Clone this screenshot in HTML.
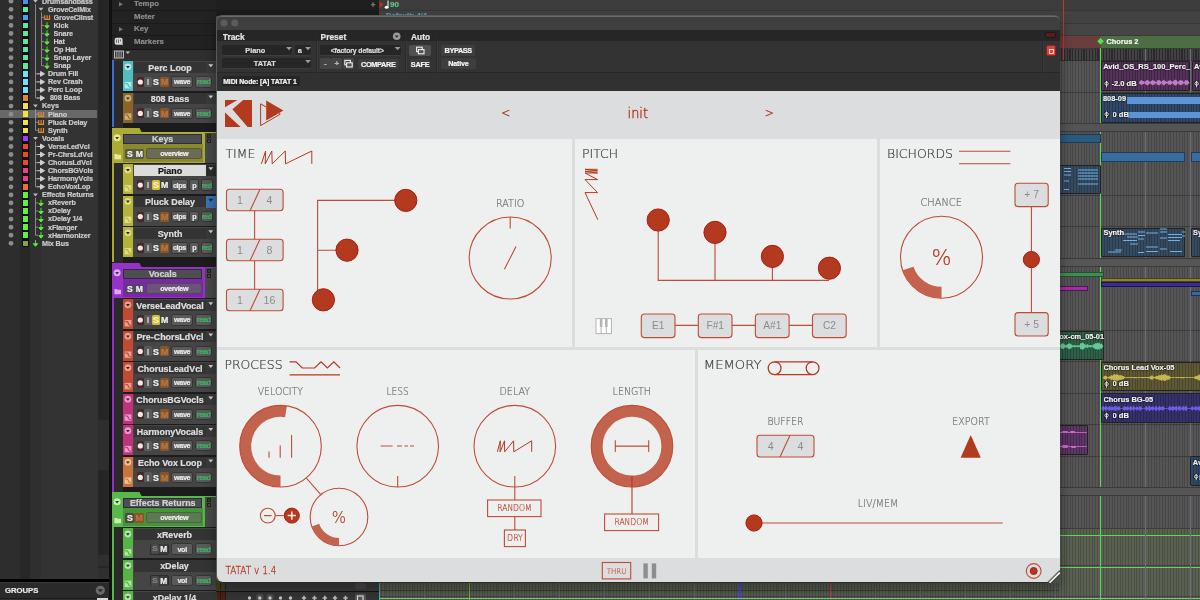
<!DOCTYPE html>
<html><head><meta charset="utf-8"><title>TATAT</title>
<style>
html,body{margin:0;padding:0}
body{width:1200px;height:600px;overflow:hidden;background:#2a2a2a;position:relative;
 font-family:"Liberation Sans",sans-serif;}
body div{position:absolute;box-sizing:border-box;white-space:nowrap;overflow:hidden}
#w{left:0;top:0;width:1200px;height:600px;will-change:transform}
.b{font-weight:bold;-webkit-text-stroke:0.22px currentColor}
.c{text-align:center}
svg{position:absolute;left:0;top:0}
svg text{font-family:"Liberation Sans",sans-serif}
svg text.lt{font-family:"DejaVu Sans Light","DejaVu Sans","Liberation Sans",sans-serif;font-weight:200}
</style></head>
<body>
<div id="w">
<div style="left:112px;top:0px;width:1088px;height:600px;background:#4a4a4a;"></div>
<div style="left:379px;top:48px;width:821px;height:552px;background:repeating-linear-gradient(90deg,#555555 0,#555555 1.8px,#474747 1.8px,#474747 2.8px);"></div>
<div style="left:215px;top:0px;width:164px;height:10px;background:#1f1f1f;"></div>
<div style="left:215px;top:10px;width:164px;height:6px;background:#1b1b1b;"></div>
<div style="left:379px;top:0px;width:821px;height:10px;background:#3d3d3d;"></div>
<div style="left:379px;top:10px;width:821px;height:12.5px;background:#424242;border-top:1px solid #373737"></div>
<div style="left:379px;top:22.5px;width:821px;height:12.5px;background:#454545;border-top:1px solid #393939"></div>
<div style="left:379px;top:35px;width:821px;height:12.5px;background:#474747;border-top:1px solid #393939"></div>
<div class="b" style="left:370.5px;top:-0.4px;width:10px;height:10px;line-height:10px;font-size:8.5px;color:#777;">+</div>
<svg width="1200" height="16" viewBox="0 0 1200 16"><path d="M379.5 1.5 L383.5 4.5 L379.5 8 Z" fill="#d0281c"/><ellipse cx="386.6" cy="7.3" rx="1.9" ry="1.5" fill="#fff"/><path d="M388 7.3 V0.5" stroke="#fff" stroke-width="1"/></svg>
<div class="b" style="left:390px;top:0px;width:20px;height:9px;line-height:9px;font-size:8px;color:#5fc08a;">90</div>
<div class="b" style="left:386px;top:10.9px;width:60px;height:9px;line-height:9px;font-size:7.6px;color:#5a9cbc;">Default: 4/4</div>
<div style="left:0px;top:0px;width:109px;height:600px;background:#2b2b2b;"></div>
<div style="left:0px;top:0px;width:20px;height:580px;background:#2d2d2d;"></div>
<div style="left:20px;top:0px;width:9.5px;height:580px;background:#272727;"></div>
<div style="left:22.4px;top:0px;width:6.4px;height:247px;background:#0e0e1a;"></div>
<div style="left:29.5px;top:0px;width:11px;height:580px;background:#2f2f2f;"></div>
<div style="left:40.5px;top:0px;width:57px;height:580px;background:#333333;"></div>
<div style="left:97.5px;top:0px;width:11px;height:580px;background:#262626;"></div>
<div style="left:97.5px;top:420px;width:11px;height:50px;background:#2e2e2e;"></div>
<div style="left:97.5px;top:555px;width:11px;height:11.4px;background:#2f2f2f;"></div>
<div style="left:97.5px;top:567.8px;width:11px;height:11px;background:#2f2f2f;"></div>
<div style="left:108.5px;top:0px;width:3.5px;height:600px;background:#101010;"></div>
<div style="left:22.8px;top:-1.6px;width:5.6px;height:5.5px;background:#4a8ee6;"></div>
<div class="b" style="left:42.0px;top:-3.5px;width:60px;height:10px;line-height:10px;font-size:7.2px;color:#cacaca;letter-spacing:-0.1px">Drumsandbass</div>
<div style="left:22.8px;top:6.5px;width:5.6px;height:5.5px;background:#5fe89c;"></div>
<div class="b" style="left:48.0px;top:4.6px;width:60px;height:10px;line-height:10px;font-size:7.2px;color:#cacaca;letter-spacing:-0.1px">GroveCelMix</div>
<div style="left:22.8px;top:14.5px;width:5.6px;height:5.5px;background:#4aa0f0;"></div>
<div class="b" style="left:53.5px;top:12.6px;width:60px;height:10px;line-height:10px;font-size:7.2px;color:#cacaca;letter-spacing:-0.1px">GroveClInst</div>
<div style="left:22.8px;top:22.6px;width:5.6px;height:5.5px;background:#5fe89c;"></div>
<div class="b" style="left:53.5px;top:20.7px;width:60px;height:10px;line-height:10px;font-size:7.2px;color:#cacaca;letter-spacing:-0.1px">Kick</div>
<div style="left:22.8px;top:30.7px;width:5.6px;height:5.5px;background:#5fe89c;"></div>
<div class="b" style="left:53.5px;top:28.8px;width:60px;height:10px;line-height:10px;font-size:7.2px;color:#cacaca;letter-spacing:-0.1px">Snare</div>
<div style="left:22.8px;top:38.8px;width:5.6px;height:5.5px;background:#5fe89c;"></div>
<div class="b" style="left:53.5px;top:36.9px;width:60px;height:10px;line-height:10px;font-size:7.2px;color:#cacaca;letter-spacing:-0.1px">Hat</div>
<div style="left:22.8px;top:46.8px;width:5.6px;height:5.5px;background:#5fe89c;"></div>
<div class="b" style="left:53.5px;top:44.9px;width:60px;height:10px;line-height:10px;font-size:7.2px;color:#cacaca;letter-spacing:-0.1px">Op Hat</div>
<div style="left:22.8px;top:54.9px;width:5.6px;height:5.5px;background:#5fe89c;"></div>
<div class="b" style="left:53.5px;top:53.0px;width:60px;height:10px;line-height:10px;font-size:7.2px;color:#cacaca;letter-spacing:-0.1px">Snap Layer</div>
<div style="left:22.8px;top:63.0px;width:5.6px;height:5.5px;background:#5fe89c;"></div>
<div class="b" style="left:53.5px;top:61.1px;width:60px;height:10px;line-height:10px;font-size:7.2px;color:#cacaca;letter-spacing:-0.1px">Snap</div>
<div style="left:22.8px;top:71.0px;width:5.6px;height:5.5px;background:#6fe4f2;"></div>
<div class="b" style="left:48.0px;top:69.1px;width:60px;height:10px;line-height:10px;font-size:7.2px;color:#cacaca;letter-spacing:-0.1px">Drum Fill</div>
<div style="left:22.8px;top:79.1px;width:5.6px;height:5.5px;background:#6fe4f2;"></div>
<div class="b" style="left:48.0px;top:77.2px;width:60px;height:10px;line-height:10px;font-size:7.2px;color:#cacaca;letter-spacing:-0.1px">Rev Crash</div>
<div style="left:22.8px;top:87.2px;width:5.6px;height:5.5px;background:#6fe4f2;"></div>
<div class="b" style="left:48.0px;top:85.3px;width:60px;height:10px;line-height:10px;font-size:7.2px;color:#cacaca;letter-spacing:-0.1px">Perc Loop</div>
<div style="left:22.8px;top:95.2px;width:5.6px;height:5.5px;background:#e08a2c;"></div>
<div class="b" style="left:48.0px;top:93.3px;width:60px;height:10px;line-height:10px;font-size:7.2px;color:#cacaca;letter-spacing:-0.1px">&nbsp;808 Bass</div>
<div style="left:22.8px;top:103.3px;width:5.6px;height:5.5px;background:#f2e23c;"></div>
<div class="b" style="left:42.0px;top:101.4px;width:60px;height:10px;line-height:10px;font-size:7.2px;color:#cacaca;letter-spacing:-0.1px">Keys</div>
<div style="left:0px;top:110.28px;width:97px;height:8.1px;background:#686868;"></div>
<div style="left:22.8px;top:111.4px;width:5.6px;height:5.5px;background:#f2e23c;"></div>
<div class="b" style="left:48.0px;top:109.5px;width:60px;height:10px;line-height:10px;font-size:7.2px;color:#cacaca;letter-spacing:-0.1px">Piano</div>
<div style="left:22.8px;top:119.5px;width:5.6px;height:5.5px;background:#f2e23c;"></div>
<div class="b" style="left:48.0px;top:117.6px;width:60px;height:10px;line-height:10px;font-size:7.2px;color:#cacaca;letter-spacing:-0.1px">Pluck Delay</div>
<div style="left:22.8px;top:127.5px;width:5.6px;height:5.5px;background:#f2e23c;"></div>
<div class="b" style="left:48.0px;top:125.6px;width:60px;height:10px;line-height:10px;font-size:7.2px;color:#cacaca;letter-spacing:-0.1px">Synth</div>
<div style="left:22.8px;top:135.6px;width:5.6px;height:5.5px;background:#a43cf0;"></div>
<div class="b" style="left:42.0px;top:133.7px;width:60px;height:10px;line-height:10px;font-size:7.2px;color:#cacaca;letter-spacing:-0.1px">Vocals</div>
<div style="left:22.8px;top:143.7px;width:5.6px;height:5.5px;background:#f04a24;"></div>
<div class="b" style="left:48.0px;top:141.8px;width:60px;height:10px;line-height:10px;font-size:7.2px;color:#cacaca;letter-spacing:-0.1px">VerseLedVcl</div>
<div style="left:22.8px;top:151.7px;width:5.6px;height:5.5px;background:#f04a24;"></div>
<div class="b" style="left:48.0px;top:149.8px;width:60px;height:10px;line-height:10px;font-size:7.2px;color:#cacaca;letter-spacing:-0.1px">Pr-ChrsLdVcl</div>
<div style="left:22.8px;top:159.8px;width:5.6px;height:5.5px;background:#f04a24;"></div>
<div class="b" style="left:48.0px;top:157.9px;width:60px;height:10px;line-height:10px;font-size:7.2px;color:#cacaca;letter-spacing:-0.1px">ChorusLdVcl</div>
<div style="left:22.8px;top:167.9px;width:5.6px;height:5.5px;background:#f0407c;"></div>
<div class="b" style="left:48.0px;top:166.0px;width:60px;height:10px;line-height:10px;font-size:7.2px;color:#cacaca;letter-spacing:-0.1px">ChorsBGVcls</div>
<div style="left:22.8px;top:175.9px;width:5.6px;height:5.5px;background:#f0407c;"></div>
<div class="b" style="left:48.0px;top:174.0px;width:60px;height:10px;line-height:10px;font-size:7.2px;color:#cacaca;letter-spacing:-0.1px">HarmonyVcls</div>
<div style="left:22.8px;top:184.0px;width:5.6px;height:5.5px;background:#f07030;"></div>
<div class="b" style="left:48.0px;top:182.1px;width:60px;height:10px;line-height:10px;font-size:7.2px;color:#cacaca;letter-spacing:-0.1px">EchoVoxLop</div>
<div style="left:22.8px;top:192.1px;width:5.6px;height:5.5px;background:#62f040;"></div>
<div class="b" style="left:42.0px;top:190.2px;width:60px;height:10px;line-height:10px;font-size:7.2px;color:#cacaca;letter-spacing:-0.1px">Effects Returns</div>
<div style="left:22.8px;top:200.1px;width:5.6px;height:5.5px;background:#62f040;"></div>
<div class="b" style="left:48.0px;top:198.2px;width:60px;height:10px;line-height:10px;font-size:7.2px;color:#cacaca;letter-spacing:-0.1px">xReverb</div>
<div style="left:22.8px;top:208.2px;width:5.6px;height:5.5px;background:#62f040;"></div>
<div class="b" style="left:48.0px;top:206.3px;width:60px;height:10px;line-height:10px;font-size:7.2px;color:#cacaca;letter-spacing:-0.1px">xDelay</div>
<div style="left:22.8px;top:216.3px;width:5.6px;height:5.5px;background:#62f040;"></div>
<div class="b" style="left:48.0px;top:214.4px;width:60px;height:10px;line-height:10px;font-size:7.2px;color:#cacaca;letter-spacing:-0.1px">xDelay 1/4</div>
<div style="left:22.8px;top:224.4px;width:5.6px;height:5.5px;background:#62f040;"></div>
<div class="b" style="left:48.0px;top:222.5px;width:60px;height:10px;line-height:10px;font-size:7.2px;color:#cacaca;letter-spacing:-0.1px">xFlanger</div>
<div style="left:22.8px;top:232.4px;width:5.6px;height:5.5px;background:#62f040;"></div>
<div class="b" style="left:48.0px;top:230.5px;width:60px;height:10px;line-height:10px;font-size:7.2px;color:#cacaca;letter-spacing:-0.1px">xHarmonizer</div>
<div style="left:22.8px;top:240.5px;width:5.6px;height:5.5px;background:#86a832;"></div>
<div class="b" style="left:42.0px;top:238.6px;width:60px;height:10px;line-height:10px;font-size:7.2px;color:#cacaca;letter-spacing:-0.1px">Mix Bus</div>
<svg width="112" height="600" viewBox="0 0 112 600"><circle cx="11" cy="1.2" r="2.4" fill="#8c8c8c"/><path d="M33.1 -0.30000000000000004 h4.8 l-2.4 3 z" fill="#bbb"/><circle cx="11" cy="9.3" r="2.4" fill="#8c8c8c"/><path d="M38.6 7.77 h4.8 l-2.4 3 z" fill="#bbb"/><circle cx="11" cy="17.3" r="2.4" fill="#8c8c8c"/><path d="M44.7 15.14 V19.44 H49.5 V15.14 M47.1 15.14 V19.44" fill="none" stroke="#e08a2c" stroke-width="1.2"/><circle cx="11" cy="25.4" r="2.4" fill="#8c8c8c"/><path d="M47 22.21 v4 M44.8 25.81 l2.2 2.6 l2.2 -2.6 z" stroke="#5cf03c" stroke-width="0.9" fill="#5cf03c"/><circle cx="11" cy="33.5" r="2.4" fill="#8c8c8c"/><path d="M47 30.280000000000005 v4 M44.8 33.88 l2.2 2.6 l2.2 -2.6 z" stroke="#5cf03c" stroke-width="0.9" fill="#5cf03c"/><circle cx="11" cy="41.6" r="2.4" fill="#8c8c8c"/><path d="M47 38.35 v4 M44.8 41.95 l2.2 2.6 l2.2 -2.6 z" stroke="#5cf03c" stroke-width="0.9" fill="#5cf03c"/><circle cx="11" cy="49.6" r="2.4" fill="#8c8c8c"/><path d="M47 46.42 v4 M44.8 50.02 l2.2 2.6 l2.2 -2.6 z" stroke="#5cf03c" stroke-width="0.9" fill="#5cf03c"/><circle cx="11" cy="57.7" r="2.4" fill="#8c8c8c"/><path d="M47 54.49 v4 M44.8 58.09 l2.2 2.6 l2.2 -2.6 z" stroke="#5cf03c" stroke-width="0.9" fill="#5cf03c"/><circle cx="11" cy="65.8" r="2.4" fill="#8c8c8c"/><path d="M47 62.56 v4 M44.8 66.16000000000001 l2.2 2.6 l2.2 -2.6 z" stroke="#5cf03c" stroke-width="0.9" fill="#5cf03c"/><circle cx="11" cy="73.8" r="2.4" fill="#8c8c8c"/><path d="M37 73.83 h4 M40.5 71.42999999999999 l4 2.4 l-4 2.4 z" stroke="#d0d0d0" stroke-width="1" fill="#d0d0d0"/><circle cx="11" cy="81.9" r="2.4" fill="#8c8c8c"/><path d="M37 81.9 h4 M40.5 79.5 l4 2.4 l-4 2.4 z" stroke="#d0d0d0" stroke-width="1" fill="#d0d0d0"/><circle cx="11" cy="90.0" r="2.4" fill="#8c8c8c"/><path d="M37 89.97000000000001 h4 M40.5 87.57000000000001 l4 2.4 l-4 2.4 z" stroke="#d0d0d0" stroke-width="1" fill="#d0d0d0"/><circle cx="11" cy="98.0" r="2.4" fill="#8c8c8c"/><path d="M37 98.04 h4 M40.5 95.64 l4 2.4 l-4 2.4 z" stroke="#d0d0d0" stroke-width="1" fill="#d0d0d0"/><circle cx="11" cy="106.1" r="2.4" fill="#8c8c8c"/><path d="M33.1 104.61 h4.8 l-2.4 3 z" fill="#bbb"/><circle cx="11" cy="114.2" r="2.4" fill="#8c8c8c"/><path d="M38.7 111.98 V116.28 H43.5 V111.98 M41.1 111.98 V116.28" fill="none" stroke="#e08a2c" stroke-width="1.2"/><circle cx="11" cy="122.3" r="2.4" fill="#8c8c8c"/><path d="M38.7 120.05000000000001 V124.35000000000001 H43.5 V120.05000000000001 M41.1 120.05000000000001 V124.35000000000001" fill="none" stroke="#e08a2c" stroke-width="1.2"/><circle cx="11" cy="130.3" r="2.4" fill="#8c8c8c"/><path d="M38.7 128.12 V132.42 H43.5 V128.12 M41.1 128.12 V132.42" fill="none" stroke="#e08a2c" stroke-width="1.2"/><circle cx="11" cy="138.4" r="2.4" fill="#8c8c8c"/><path d="M33.1 136.89 h4.8 l-2.4 3 z" fill="#bbb"/><circle cx="11" cy="146.5" r="2.4" fill="#8c8c8c"/><path d="M37 146.45999999999998 h4 M40.5 144.05999999999997 l4 2.4 l-4 2.4 z" stroke="#d0d0d0" stroke-width="1" fill="#d0d0d0"/><circle cx="11" cy="154.5" r="2.4" fill="#8c8c8c"/><path d="M37 154.53 h4 M40.5 152.13 l4 2.4 l-4 2.4 z" stroke="#d0d0d0" stroke-width="1" fill="#d0d0d0"/><circle cx="11" cy="162.6" r="2.4" fill="#8c8c8c"/><path d="M37 162.6 h4 M40.5 160.2 l4 2.4 l-4 2.4 z" stroke="#d0d0d0" stroke-width="1" fill="#d0d0d0"/><circle cx="11" cy="170.7" r="2.4" fill="#8c8c8c"/><path d="M37 170.67 h4 M40.5 168.26999999999998 l4 2.4 l-4 2.4 z" stroke="#d0d0d0" stroke-width="1" fill="#d0d0d0"/><circle cx="11" cy="178.7" r="2.4" fill="#8c8c8c"/><path d="M37 178.74 h4 M40.5 176.34 l4 2.4 l-4 2.4 z" stroke="#d0d0d0" stroke-width="1" fill="#d0d0d0"/><circle cx="11" cy="186.8" r="2.4" fill="#8c8c8c"/><path d="M37 186.81 h4 M40.5 184.41 l4 2.4 l-4 2.4 z" stroke="#d0d0d0" stroke-width="1" fill="#d0d0d0"/><circle cx="11" cy="194.9" r="2.4" fill="#8c8c8c"/><path d="M33.1 193.38 h4.8 l-2.4 3 z" fill="#bbb"/><circle cx="11" cy="202.9" r="2.4" fill="#8c8c8c"/><path d="M41 199.75 v4 M38.8 203.35 l2.2 2.6 l2.2 -2.6 z" stroke="#5cf03c" stroke-width="0.9" fill="#5cf03c"/><circle cx="11" cy="211.0" r="2.4" fill="#8c8c8c"/><path d="M41 207.82 v4 M38.8 211.42 l2.2 2.6 l2.2 -2.6 z" stroke="#5cf03c" stroke-width="0.9" fill="#5cf03c"/><circle cx="11" cy="219.1" r="2.4" fill="#8c8c8c"/><path d="M41 215.89000000000001 v4 M38.8 219.49 l2.2 2.6 l2.2 -2.6 z" stroke="#5cf03c" stroke-width="0.9" fill="#5cf03c"/><circle cx="11" cy="227.2" r="2.4" fill="#8c8c8c"/><path d="M41 223.96 v4 M38.8 227.56 l2.2 2.6 l2.2 -2.6 z" stroke="#5cf03c" stroke-width="0.9" fill="#5cf03c"/><circle cx="11" cy="235.2" r="2.4" fill="#8c8c8c"/><path d="M41 232.03 v4 M38.8 235.63 l2.2 2.6 l2.2 -2.6 z" stroke="#5cf03c" stroke-width="0.9" fill="#5cf03c"/><circle cx="11" cy="243.3" r="2.4" fill="#8c8c8c"/><path d="M35.5 240.10000000000002 v4 M33.3 243.70000000000002 l2.2 2.6 l2.2 -2.6 z" stroke="#5cf03c" stroke-width="0.9" fill="#5cf03c"/><path d="M35.5 4.2 V98.04 M35.5 73.83 h2.5 M35.5 81.9 h2.5 M35.5 89.97000000000001 h2.5 M35.5 98.04 h2.5 M41.5 12.27 V65.76 M41.5 17.34 h2.6 M41.5 25.41 h2.6 M41.5 33.480000000000004 h2.6 M41.5 41.550000000000004 h2.6 M41.5 49.620000000000005 h2.6 M41.5 57.690000000000005 h2.6 M41.5 65.76 h2.6 M35.5 109.11 V130.32 M35.5 114.18 h2.6 M35.5 122.25000000000001 h2.6 M35.5 130.32 h2.6 M35.5 141.39 V186.81 M35.5 146.45999999999998 h2.5 M35.5 154.53 h2.5 M35.5 162.6 h2.5 M35.5 170.67 h2.5 M35.5 178.74 h2.5 M35.5 186.81 h2.5 M35.5 197.88 V235.23 M35.5 202.95 h2.5 M35.5 211.01999999999998 h2.5 M35.5 219.09 h2.5 M35.5 227.16 h2.5 M35.5 235.23 h2.5 " stroke="#a0a0a0" stroke-width="0.8" fill="none"/></svg>
<div style="left:0px;top:578.5px;width:108.5px;height:3.6px;background:#020202;"></div>
<div style="left:0px;top:582px;width:108.5px;height:16.4px;background:#2a2a2a;border-top:1px solid #383838"></div>
<div style="left:0px;top:598.2px;width:108.5px;height:2px;background:#303030;border-top:1px solid #1a1a1a"></div>
<div class="b" style="left:5px;top:585.3px;width:60px;height:12px;line-height:12px;font-size:7.7px;color:#e8e8e8;">GROUPS</div>
<svg width="112" height="600" viewBox="0 0 112 600"><circle cx="100.3" cy="590.3" r="4.6" fill="#6a6a6a"/><path d="M97.6 589.2 h5.4 l-2.7 3 z" fill="#2a2a2a"/></svg>
<div style="left:97px;top:598px;width:11px;height:2px;background:#d8d8d8;"></div>
<div style="left:112px;top:0px;width:103.5px;height:48.5px;background:#222222;"></div>
<div class="b" style="left:134px;top:-1.7000000000000002px;width:60px;height:12px;line-height:12px;font-size:7.8px;color:#8c8c8c;">Tempo</div>
<svg width="220" height="60" viewBox="0 0 220 60"><path d="M119 1.9 l4 2.3 l-4 2.3 z" fill="#777"/></svg>
<div style="left:112px;top:10.4px;width:103.5px;height:1px;background:#1a1a1a;"></div>
<div class="b" style="left:134px;top:10.8px;width:60px;height:12px;line-height:12px;font-size:7.8px;color:#8c8c8c;">Meter</div>
<div style="left:112px;top:22.9px;width:103.5px;height:1px;background:#1a1a1a;"></div>
<div class="b" style="left:134px;top:23.299999999999997px;width:60px;height:12px;line-height:12px;font-size:7.8px;color:#8c8c8c;">Key</div>
<svg width="220" height="60" viewBox="0 0 220 60"><path d="M119 26.9 l4 2.3 l-4 2.3 z" fill="#777"/></svg>
<div style="left:112px;top:35.4px;width:103.5px;height:1px;background:#1a1a1a;"></div>
<div class="b" style="left:134px;top:35.8px;width:60px;height:12px;line-height:12px;font-size:7.8px;color:#8c8c8c;">Markers</div>
<svg width="220" height="60" viewBox="0 0 220 60"><rect x="114.6" y="37.699999999999996" width="8" height="7" rx="2" fill="#d8d8d8"/><path d="M120 43.4 l3 2 l-1 -3 z" fill="#d8d8d8"/><path d="M116.5 39.4 v3.5 M118.5 39.4 v3.5 M120.5 39.4 v2" stroke="#555" stroke-width="0.8"/></svg>
<div style="left:112px;top:48.5px;width:103.5px;height:12px;background:#2f2f2f;border-top:1px solid #151515"></div>
<svg width="220" height="62" viewBox="0 0 220 62"><rect x="114.5" y="51" width="9" height="7" fill="#3a3a3a" stroke="#b8b8b8" stroke-width="1"/><path d="M116.8 51 v7 M119 51 v7 M121.2 51 v7" stroke="#b8b8b8" stroke-width="0.8"/><path d="M125.6 51.5 h4.4 l-2.2 2.6 z" fill="#c8c8c8"/></svg>
<div style="left:112px;top:60.5px;width:103.5px;height:540px;background:#1c1c1c;"></div>
<div style="left:114px;top:60.5px;width:8.5px;height:540px;background:#2a2a2a;"></div>
<div style="left:112px;top:60px;width:2px;height:67px;background:#3b6ed0;"></div>
<div style="left:122.5px;top:61.2px;width:93px;height:30px;background:#454545;"></div>
<div style="left:122.5px;top:61.2px;width:10.8px;height:30px;background:#4fbfc0;"></div>
<div style="left:134px;top:61.7px;width:72px;height:11.2px;background:#343434;"></div>
<div style="left:206px;top:61.7px;width:9.5px;height:11.2px;background:#3a3a3a;"></div>
<div class="b" style="left:131px;top:62.7px;width:78px;height:10.6px;line-height:10.6px;font-size:8.9px;color:#dedede;text-align:center">Perc Loop</div>
<div style="left:136.5px;top:77.0px;width:7.6px;height:10px;background:#4c2626;border-radius:1.5px;"></div>
<div style="left:144.1px;top:77.0px;width:7.8px;height:10px;background:#5a5a5a;border-radius:1.5px;"></div>
<div class="b" style="left:142.1px;top:77.2px;width:11.8px;height:10px;line-height:10px;font-size:8.8px;color:#c8c8c8;text-align:center;background:none;">I</div>
<div style="left:151.9px;top:77.0px;width:8.2px;height:10px;background:#484848;border-radius:1.5px;"></div>
<div class="b" style="left:149.9px;top:77.2px;width:12.2px;height:10px;line-height:10px;font-size:8.8px;color:#f0f0f0;text-align:center;background:none;">S</div>
<div style="left:160.1px;top:77.0px;width:8.9px;height:10px;background:#8a5424;border-radius:1.5px;"></div>
<div class="b" style="left:158.1px;top:77.2px;width:12.9px;height:10px;line-height:10px;font-size:8.8px;color:#b27a48;text-align:center;background:none;">M</div>
<div style="left:170.9px;top:76.2px;width:22.5px;height:11.4px;background:#5a5a5a;border-radius:1.5px;border:1px solid #343434;border-radius:2.5px"></div>
<div class="b" style="left:168.9px;top:76.4px;width:26.5px;height:11.4px;line-height:11.4px;font-size:7.2px;color:#e8e8e8;text-align:center;background:none;letter-spacing:-0.35px;">wave</div>
<div style="left:194.9px;top:76.2px;width:17.6px;height:11.4px;background:#5a5a5a;border-radius:1.5px;border:1px solid #343434;border-radius:2.5px"></div>
<div class="b" style="left:192.9px;top:76.4px;width:21.6px;height:11.4px;line-height:11.4px;font-size:7.2px;color:#3fb565;text-align:center;background:none;letter-spacing:-0.35px;">read</div>
<svg width="220" height="600" viewBox="0 0 220 600"><circle cx="127.9" cy="66.8" r="3.4" fill="#b8e8e8"/><path d="M125.9 66.0 h4 l-2 2.4 z" fill="#2a2a2a"/><rect x="124.6" y="82.0" width="6.8" height="6.4" fill="#b8e8e8"/><path d="M125.2 83.4 q3 0 3.2 2 t2.6 2" stroke="#4fbfc0" stroke-width="1.1" fill="none"/><circle cx="140.3" cy="82.0" r="2.6" fill="#f0e8e8"/><path d="M208.4 64.2 h4.8 l-2.4 3 z" fill="#d8d8d8"/></svg>
<div style="left:122.5px;top:92.6px;width:93px;height:30px;background:#454545;"></div>
<div style="left:122.5px;top:92.6px;width:10.8px;height:30px;background:#8a6526;"></div>
<div style="left:134px;top:93.1px;width:72px;height:11.2px;background:#343434;"></div>
<div style="left:206px;top:93.1px;width:9.5px;height:11.2px;background:#3a3a3a;"></div>
<div class="b" style="left:131px;top:94.1px;width:78px;height:10.6px;line-height:10.6px;font-size:8.9px;color:#dedede;text-align:center">808 Bass</div>
<div style="left:136.5px;top:108.39999999999999px;width:7.6px;height:10px;background:#4c2626;border-radius:1.5px;"></div>
<div style="left:144.1px;top:108.39999999999999px;width:7.8px;height:10px;background:#5a5a5a;border-radius:1.5px;"></div>
<div class="b" style="left:142.1px;top:108.6px;width:11.8px;height:10px;line-height:10px;font-size:8.8px;color:#c8c8c8;text-align:center;background:none;">I</div>
<div style="left:151.9px;top:108.39999999999999px;width:8.2px;height:10px;background:#484848;border-radius:1.5px;"></div>
<div class="b" style="left:149.9px;top:108.6px;width:12.2px;height:10px;line-height:10px;font-size:8.8px;color:#f0f0f0;text-align:center;background:none;">S</div>
<div style="left:160.1px;top:108.39999999999999px;width:8.9px;height:10px;background:#8a5424;border-radius:1.5px;"></div>
<div class="b" style="left:158.1px;top:108.6px;width:12.9px;height:10px;line-height:10px;font-size:8.8px;color:#b27a48;text-align:center;background:none;">M</div>
<div style="left:170.9px;top:107.6px;width:22.5px;height:11.4px;background:#5a5a5a;border-radius:1.5px;border:1px solid #343434;border-radius:2.5px"></div>
<div class="b" style="left:168.9px;top:107.8px;width:26.5px;height:11.4px;line-height:11.4px;font-size:7.2px;color:#e8e8e8;text-align:center;background:none;letter-spacing:-0.35px;">wave</div>
<div style="left:194.9px;top:107.6px;width:17.6px;height:11.4px;background:#5a5a5a;border-radius:1.5px;border:1px solid #343434;border-radius:2.5px"></div>
<div class="b" style="left:192.9px;top:107.8px;width:21.6px;height:11.4px;line-height:11.4px;font-size:7.2px;color:#3fb565;text-align:center;background:none;letter-spacing:-0.35px;">read</div>
<svg width="220" height="600" viewBox="0 0 220 600"><circle cx="127.9" cy="98.19999999999999" r="3.4" fill="#ccb07c"/><path d="M125.9 97.39999999999999 h4 l-2 2.4 z" fill="#2a2a2a"/><rect x="124.6" y="113.39999999999999" width="6.8" height="6.4" fill="#ccb07c"/><path d="M125.2 114.8 q3 0 3.2 2 t2.6 2" stroke="#8a6526" stroke-width="1.1" fill="none"/><circle cx="140.3" cy="113.39999999999999" r="2.6" fill="#f0e8e8"/><path d="M208.4 95.6 h4.8 l-2.4 3 z" fill="#d8d8d8"/></svg>
<svg width="220" height="600" viewBox="0 0 220 600"><path d="M112 128 H139.5 L141.5 132 H112 Z" fill="#acac34"/></svg>
<div style="left:112px;top:132px;width:92.5px;height:31.3px;background:#acac34;"></div>
<div style="left:204.5px;top:132px;width:11px;height:31.3px;background:#4a4a4a;"></div>
<div style="left:141px;top:131.7px;width:75px;height:1.3px;background:#acac34;"></div>
<div style="left:206.6px;top:134.2px;width:4.6px;height:3.6px;background:#2c4a22;border:0.5px solid #222"></div>
<div style="left:206.6px;top:139.4px;width:4.6px;height:3.6px;background:#5e4a26;border:0.5px solid #222"></div>
<div style="left:122.8px;top:144.4px;width:80.6px;height:17.4px;background:#8a8a2a;"></div>
<div style="left:123.3px;top:134px;width:78.8px;height:10.2px;background:#4e4e50;border:1px solid #2c2c44"></div>
<div class="b" style="left:123.3px;top:133.9px;width:78.8px;height:10.2px;line-height:10.2px;font-size:8.9px;color:#d2d2d2;text-align:center">Keys</div>
<div style="left:125.4px;top:148.6px;width:18.4px;height:10.2px;background:#5a5a44;border-radius:1.5px;"></div>
<div class="b" style="left:124.4px;top:148.8px;width:11px;height:10.2px;line-height:10.2px;font-size:8.6px;color:#f0f0f0;text-align:center">S</div>
<div class="b" style="left:133.8px;top:148.8px;width:11px;height:10.2px;line-height:10.2px;font-size:8.6px;color:#f0f0f0;text-align:center">M</div>
<div style="left:146.4px;top:148.4px;width:55.8px;height:10.6px;background:#6c6c54;border-radius:1.5px;border-radius:2.5px;border:1px solid #00000030"></div>
<div class="b" style="left:144.4px;top:148.6px;width:59.8px;height:10.6px;line-height:10.6px;font-size:7.2px;color:#f0f0f0;text-align:center;background:none;letter-spacing:-0.35px;">overview</div>
<svg width="220" height="600" viewBox="0 0 220 600"><circle cx="117.1" cy="137.8" r="3.5" fill="#e8e8a0"/><path d="M115.1 137 h4 l-2 2.4 z" fill="#3a3a2a"/><path d="M114.4 154 h2.4 l0.6 0.8 h3.6 v4.4 h-6.6 z" fill="#e8e8a0"/></svg>
<div style="left:112px;top:163px;width:2.2px;height:99px;background:#a9a932;"></div>
<div style="left:122.5px;top:164.3px;width:93px;height:30px;background:#454545;"></div>
<div style="left:122.5px;top:164.3px;width:10.8px;height:30px;background:#b4b436;"></div>
<div style="left:134px;top:164.8px;width:72px;height:11.2px;background:#dcdcdc;"></div>
<div style="left:206px;top:164.8px;width:9.5px;height:11.2px;background:#2e2e2e;"></div>
<div class="b" style="left:134px;top:165.8px;width:72px;height:10.6px;line-height:10.6px;font-size:8.9px;color:#111;text-align:center">Piano</div>
<div style="left:136.5px;top:180.10000000000002px;width:7.6px;height:10px;background:#4c2626;border-radius:1.5px;"></div>
<div style="left:144.1px;top:180.10000000000002px;width:7.8px;height:10px;background:#5a5a5a;border-radius:1.5px;"></div>
<div class="b" style="left:142.1px;top:180.3px;width:11.8px;height:10px;line-height:10px;font-size:8.8px;color:#c8c8c8;text-align:center;background:none;">I</div>
<div style="left:151.9px;top:180.10000000000002px;width:8.2px;height:10px;background:#d6bc30;border-radius:1.5px;"></div>
<div class="b" style="left:149.9px;top:180.3px;width:12.2px;height:10px;line-height:10px;font-size:8.8px;color:#f4f0d0;text-align:center;background:none;">S</div>
<div style="left:160.1px;top:180.10000000000002px;width:8.9px;height:10px;background:#444444;border-radius:1.5px;"></div>
<div class="b" style="left:158.1px;top:180.3px;width:12.9px;height:10px;line-height:10px;font-size:8.8px;color:#f0f0f0;text-align:center;background:none;">M</div>
<div style="left:170.9px;top:179.3px;width:17px;height:11.4px;background:#5a5a5a;border-radius:1.5px;border:1px solid #343434;border-radius:2.5px"></div>
<div class="b" style="left:168.9px;top:179.5px;width:21px;height:11.4px;line-height:11.4px;font-size:7.2px;color:#e8e8e8;text-align:center;background:none;letter-spacing:-0.35px;">clps</div>
<div style="left:189.4px;top:179.3px;width:10px;height:11.4px;background:#5a5a5a;border-radius:1.5px;border:1px solid #343434;border-radius:2.5px"></div>
<div class="b" style="left:187.4px;top:179.5px;width:14px;height:11.4px;line-height:11.4px;font-size:7.2px;color:#e8e8e8;text-align:center;background:none;">p</div>
<div style="left:200.8px;top:179.3px;width:11.8px;height:11.4px;background:#5a5a5a;border-radius:1.5px;border:1px solid #343434;border-radius:2.5px"></div>
<div class="b" style="left:198.8px;top:179.5px;width:15.8px;height:11.4px;line-height:11.4px;font-size:7.2px;color:#3fb565;text-align:center;background:none;letter-spacing:-0.35px;">red</div>
<svg width="220" height="600" viewBox="0 0 220 600"><circle cx="127.9" cy="169.9" r="3.4" fill="#dede88"/><path d="M125.9 169.10000000000002 h4 l-2 2.4 z" fill="#2a2a2a"/><rect x="124.6" y="185.10000000000002" width="6.8" height="6.4" fill="#dede88"/><path d="M125.2 186.5 q3 0 3.2 2 t2.6 2" stroke="#b4b436" stroke-width="1.1" fill="none"/><circle cx="140.3" cy="185.10000000000002" r="2.6" fill="#f0e8e8"/><path d="M208.4 167.3 h4.8 l-2.4 3 z" fill="#d8d8d8"/></svg>
<div style="left:122.5px;top:195.8px;width:93px;height:30px;background:#454545;"></div>
<div style="left:122.5px;top:195.8px;width:10.8px;height:30px;background:#b4b436;"></div>
<div style="left:134px;top:196.3px;width:72px;height:11.2px;background:#343434;"></div>
<div style="left:206px;top:196.3px;width:9.5px;height:11.2px;background:#3a3a3a;"></div>
<div class="b" style="left:131px;top:197.3px;width:78px;height:10.6px;line-height:10.6px;font-size:8.9px;color:#dedede;text-align:center">Pluck Delay</div>
<div style="left:206px;top:196.3px;width:9.5px;height:11.5px;background:#3a74b4;"></div>
<div style="left:136.5px;top:211.60000000000002px;width:7.6px;height:10px;background:#4c2626;border-radius:1.5px;"></div>
<div style="left:144.1px;top:211.60000000000002px;width:7.8px;height:10px;background:#5a5a5a;border-radius:1.5px;"></div>
<div class="b" style="left:142.1px;top:211.8px;width:11.8px;height:10px;line-height:10px;font-size:8.8px;color:#c8c8c8;text-align:center;background:none;">I</div>
<div style="left:151.9px;top:211.60000000000002px;width:8.2px;height:10px;background:#484848;border-radius:1.5px;"></div>
<div class="b" style="left:149.9px;top:211.8px;width:12.2px;height:10px;line-height:10px;font-size:8.8px;color:#f0f0f0;text-align:center;background:none;">S</div>
<div style="left:160.1px;top:211.60000000000002px;width:8.9px;height:10px;background:#8a5424;border-radius:1.5px;"></div>
<div class="b" style="left:158.1px;top:211.8px;width:12.9px;height:10px;line-height:10px;font-size:8.8px;color:#b27a48;text-align:center;background:none;">M</div>
<div style="left:170.9px;top:210.8px;width:17px;height:11.4px;background:#5a5a5a;border-radius:1.5px;border:1px solid #343434;border-radius:2.5px"></div>
<div class="b" style="left:168.9px;top:211.0px;width:21px;height:11.4px;line-height:11.4px;font-size:7.2px;color:#e8e8e8;text-align:center;background:none;letter-spacing:-0.35px;">clps</div>
<div style="left:189.4px;top:210.8px;width:10px;height:11.4px;background:#5a5a5a;border-radius:1.5px;border:1px solid #343434;border-radius:2.5px"></div>
<div class="b" style="left:187.4px;top:211.0px;width:14px;height:11.4px;line-height:11.4px;font-size:7.2px;color:#e8e8e8;text-align:center;background:none;">p</div>
<div style="left:200.8px;top:210.8px;width:11.8px;height:11.4px;background:#5a5a5a;border-radius:1.5px;border:1px solid #343434;border-radius:2.5px"></div>
<div class="b" style="left:198.8px;top:211.0px;width:15.8px;height:11.4px;line-height:11.4px;font-size:7.2px;color:#3fb565;text-align:center;background:none;letter-spacing:-0.35px;">red</div>
<svg width="220" height="600" viewBox="0 0 220 600"><circle cx="127.9" cy="201.4" r="3.4" fill="#dede88"/><path d="M125.9 200.60000000000002 h4 l-2 2.4 z" fill="#2a2a2a"/><rect x="124.6" y="216.60000000000002" width="6.8" height="6.4" fill="#dede88"/><path d="M125.2 218.0 q3 0 3.2 2 t2.6 2" stroke="#b4b436" stroke-width="1.1" fill="none"/><circle cx="140.3" cy="216.60000000000002" r="2.6" fill="#f0e8e8"/><path d="M208.4 198.8 h4.8 l-2.4 3 z" fill="#1a2a3a"/></svg>
<div style="left:122.5px;top:227.2px;width:93px;height:30px;background:#454545;"></div>
<div style="left:122.5px;top:227.2px;width:10.8px;height:30px;background:#b4b436;"></div>
<div style="left:134px;top:227.7px;width:72px;height:11.2px;background:#343434;"></div>
<div style="left:206px;top:227.7px;width:9.5px;height:11.2px;background:#3a3a3a;"></div>
<div class="b" style="left:131px;top:228.7px;width:78px;height:10.6px;line-height:10.6px;font-size:8.9px;color:#dedede;text-align:center">Synth</div>
<div style="left:136.5px;top:243.0px;width:7.6px;height:10px;background:#4c2626;border-radius:1.5px;"></div>
<div style="left:144.1px;top:243.0px;width:7.8px;height:10px;background:#5a5a5a;border-radius:1.5px;"></div>
<div class="b" style="left:142.1px;top:243.2px;width:11.8px;height:10px;line-height:10px;font-size:8.8px;color:#c8c8c8;text-align:center;background:none;">I</div>
<div style="left:151.9px;top:243.0px;width:8.2px;height:10px;background:#484848;border-radius:1.5px;"></div>
<div class="b" style="left:149.9px;top:243.2px;width:12.2px;height:10px;line-height:10px;font-size:8.8px;color:#f0f0f0;text-align:center;background:none;">S</div>
<div style="left:160.1px;top:243.0px;width:8.9px;height:10px;background:#8a5424;border-radius:1.5px;"></div>
<div class="b" style="left:158.1px;top:243.2px;width:12.9px;height:10px;line-height:10px;font-size:8.8px;color:#b27a48;text-align:center;background:none;">M</div>
<div style="left:170.9px;top:242.2px;width:17px;height:11.4px;background:#5a5a5a;border-radius:1.5px;border:1px solid #343434;border-radius:2.5px"></div>
<div class="b" style="left:168.9px;top:242.39999999999998px;width:21px;height:11.4px;line-height:11.4px;font-size:7.2px;color:#e8e8e8;text-align:center;background:none;letter-spacing:-0.35px;">clps</div>
<div style="left:189.4px;top:242.2px;width:10px;height:11.4px;background:#5a5a5a;border-radius:1.5px;border:1px solid #343434;border-radius:2.5px"></div>
<div class="b" style="left:187.4px;top:242.39999999999998px;width:14px;height:11.4px;line-height:11.4px;font-size:7.2px;color:#e8e8e8;text-align:center;background:none;">p</div>
<div style="left:200.8px;top:242.2px;width:11.8px;height:11.4px;background:#5a5a5a;border-radius:1.5px;border:1px solid #343434;border-radius:2.5px"></div>
<div class="b" style="left:198.8px;top:242.39999999999998px;width:15.8px;height:11.4px;line-height:11.4px;font-size:7.2px;color:#3fb565;text-align:center;background:none;letter-spacing:-0.35px;">red</div>
<svg width="220" height="600" viewBox="0 0 220 600"><circle cx="127.9" cy="232.79999999999998" r="3.4" fill="#dede88"/><path d="M125.9 232.0 h4 l-2 2.4 z" fill="#2a2a2a"/><rect x="124.6" y="248.0" width="6.8" height="6.4" fill="#dede88"/><path d="M125.2 249.39999999999998 q3 0 3.2 2 t2.6 2" stroke="#b4b436" stroke-width="1.1" fill="none"/><circle cx="140.3" cy="248.0" r="2.6" fill="#f0e8e8"/><path d="M208.4 230.2 h4.8 l-2.4 3 z" fill="#d8d8d8"/></svg>
<svg width="220" height="600" viewBox="0 0 220 600"><path d="M112 263 H139.5 L141.5 267 H112 Z" fill="#9632c8"/></svg>
<div style="left:112px;top:267px;width:92.5px;height:31.3px;background:#9632c8;"></div>
<div style="left:204.5px;top:267px;width:11px;height:31.3px;background:#4a4a4a;"></div>
<div style="left:141px;top:266.7px;width:75px;height:1.3px;background:#9632c8;"></div>
<div style="left:206.6px;top:269.2px;width:4.6px;height:3.6px;background:#2c4a22;border:0.5px solid #222"></div>
<div style="left:206.6px;top:274.4px;width:4.6px;height:3.6px;background:#5e4a26;border:0.5px solid #222"></div>
<div style="left:122.8px;top:279.4px;width:80.6px;height:17.4px;background:#7a28a4;"></div>
<div style="left:123.3px;top:269px;width:78.8px;height:10.2px;background:#4e4e50;border:1px solid #2c2c44"></div>
<div class="b" style="left:123.3px;top:268.9px;width:78.8px;height:10.2px;line-height:10.2px;font-size:8.9px;color:#d2d2d2;text-align:center">Vocals</div>
<div style="left:125.4px;top:283.6px;width:18.4px;height:10.2px;background:#57406a;border-radius:1.5px;"></div>
<div class="b" style="left:124.4px;top:283.8px;width:11px;height:10.2px;line-height:10.2px;font-size:8.6px;color:#f0f0f0;text-align:center">S</div>
<div class="b" style="left:133.8px;top:283.8px;width:11px;height:10.2px;line-height:10.2px;font-size:8.6px;color:#f0f0f0;text-align:center">M</div>
<div style="left:146.4px;top:283.4px;width:55.8px;height:10.6px;background:#6a5478;border-radius:1.5px;border-radius:2.5px;border:1px solid #00000030"></div>
<div class="b" style="left:144.4px;top:283.59999999999997px;width:59.8px;height:10.6px;line-height:10.6px;font-size:7.2px;color:#f0f0f0;text-align:center;background:none;letter-spacing:-0.35px;">overview</div>
<svg width="220" height="600" viewBox="0 0 220 600"><circle cx="117.1" cy="272.8" r="3.5" fill="#dba8f4"/><path d="M115.1 272 h4 l-2 2.4 z" fill="#3a3a2a"/><path d="M114.4 289 h2.4 l0.6 0.8 h3.6 v4.4 h-6.6 z" fill="#dba8f4"/></svg>
<div style="left:112px;top:298px;width:2.2px;height:195px;background:#922fc4;"></div>
<div style="left:122.5px;top:299.2px;width:93px;height:30px;background:#454545;"></div>
<div style="left:122.5px;top:299.2px;width:10.8px;height:30px;background:#c04a32;"></div>
<div style="left:134px;top:299.7px;width:72px;height:11.2px;background:#343434;"></div>
<div style="left:206px;top:299.7px;width:9.5px;height:11.2px;background:#3a3a3a;"></div>
<div class="b" style="left:131px;top:300.7px;width:78px;height:10.6px;line-height:10.6px;font-size:8.9px;color:#dedede;text-align:center">VerseLeadVocal</div>
<div style="left:136.5px;top:315.0px;width:7.6px;height:10px;background:#4c2626;border-radius:1.5px;"></div>
<div style="left:144.1px;top:315.0px;width:7.8px;height:10px;background:#5a5a5a;border-radius:1.5px;"></div>
<div class="b" style="left:142.1px;top:315.2px;width:11.8px;height:10px;line-height:10px;font-size:8.8px;color:#c8c8c8;text-align:center;background:none;">I</div>
<div style="left:151.9px;top:315.0px;width:8.2px;height:10px;background:#d6bc30;border-radius:1.5px;"></div>
<div class="b" style="left:149.9px;top:315.2px;width:12.2px;height:10px;line-height:10px;font-size:8.8px;color:#f4f0d0;text-align:center;background:none;">S</div>
<div style="left:160.1px;top:315.0px;width:8.9px;height:10px;background:#444444;border-radius:1.5px;"></div>
<div class="b" style="left:158.1px;top:315.2px;width:12.9px;height:10px;line-height:10px;font-size:8.8px;color:#f0f0f0;text-align:center;background:none;">M</div>
<div style="left:170.9px;top:314.2px;width:22.5px;height:11.4px;background:#5a5a5a;border-radius:1.5px;border:1px solid #343434;border-radius:2.5px"></div>
<div class="b" style="left:168.9px;top:314.4px;width:26.5px;height:11.4px;line-height:11.4px;font-size:7.2px;color:#e8e8e8;text-align:center;background:none;letter-spacing:-0.35px;">wave</div>
<div style="left:194.9px;top:314.2px;width:17.6px;height:11.4px;background:#5a5a5a;border-radius:1.5px;border:1px solid #343434;border-radius:2.5px"></div>
<div class="b" style="left:192.9px;top:314.4px;width:21.6px;height:11.4px;line-height:11.4px;font-size:7.2px;color:#3fb565;text-align:center;background:none;letter-spacing:-0.35px;">read</div>
<svg width="220" height="600" viewBox="0 0 220 600"><circle cx="127.9" cy="304.8" r="3.4" fill="#eaa090"/><path d="M125.9 304.0 h4 l-2 2.4 z" fill="#2a2a2a"/><rect x="124.6" y="320.0" width="6.8" height="6.4" fill="#eaa090"/><path d="M125.2 321.4 q3 0 3.2 2 t2.6 2" stroke="#c04a32" stroke-width="1.1" fill="none"/><circle cx="140.3" cy="320.0" r="2.6" fill="#f0e8e8"/><path d="M208.4 302.2 h4.8 l-2.4 3 z" fill="#d8d8d8"/></svg>
<div style="left:122.5px;top:330.6px;width:93px;height:30px;background:#454545;"></div>
<div style="left:122.5px;top:330.6px;width:10.8px;height:30px;background:#c04a32;"></div>
<div style="left:134px;top:331.1px;width:72px;height:11.2px;background:#343434;"></div>
<div style="left:206px;top:331.1px;width:9.5px;height:11.2px;background:#3a3a3a;"></div>
<div class="b" style="left:131px;top:332.1px;width:78px;height:10.6px;line-height:10.6px;font-size:8.9px;color:#dedede;text-align:center">Pre-ChorsLdVcl</div>
<div style="left:136.5px;top:346.40000000000003px;width:7.6px;height:10px;background:#4c2626;border-radius:1.5px;"></div>
<div style="left:144.1px;top:346.40000000000003px;width:7.8px;height:10px;background:#5a5a5a;border-radius:1.5px;"></div>
<div class="b" style="left:142.1px;top:346.6px;width:11.8px;height:10px;line-height:10px;font-size:8.8px;color:#c8c8c8;text-align:center;background:none;">I</div>
<div style="left:151.9px;top:346.40000000000003px;width:8.2px;height:10px;background:#484848;border-radius:1.5px;"></div>
<div class="b" style="left:149.9px;top:346.6px;width:12.2px;height:10px;line-height:10px;font-size:8.8px;color:#f0f0f0;text-align:center;background:none;">S</div>
<div style="left:160.1px;top:346.40000000000003px;width:8.9px;height:10px;background:#8a5424;border-radius:1.5px;"></div>
<div class="b" style="left:158.1px;top:346.6px;width:12.9px;height:10px;line-height:10px;font-size:8.8px;color:#b27a48;text-align:center;background:none;">M</div>
<div style="left:170.9px;top:345.6px;width:22.5px;height:11.4px;background:#5a5a5a;border-radius:1.5px;border:1px solid #343434;border-radius:2.5px"></div>
<div class="b" style="left:168.9px;top:345.8px;width:26.5px;height:11.4px;line-height:11.4px;font-size:7.2px;color:#e8e8e8;text-align:center;background:none;letter-spacing:-0.35px;">wave</div>
<div style="left:194.9px;top:345.6px;width:17.6px;height:11.4px;background:#5a5a5a;border-radius:1.5px;border:1px solid #343434;border-radius:2.5px"></div>
<div class="b" style="left:192.9px;top:345.8px;width:21.6px;height:11.4px;line-height:11.4px;font-size:7.2px;color:#3fb565;text-align:center;background:none;letter-spacing:-0.35px;">read</div>
<svg width="220" height="600" viewBox="0 0 220 600"><circle cx="127.9" cy="336.20000000000005" r="3.4" fill="#eaa090"/><path d="M125.9 335.40000000000003 h4 l-2 2.4 z" fill="#2a2a2a"/><rect x="124.6" y="351.40000000000003" width="6.8" height="6.4" fill="#eaa090"/><path d="M125.2 352.8 q3 0 3.2 2 t2.6 2" stroke="#c04a32" stroke-width="1.1" fill="none"/><circle cx="140.3" cy="351.40000000000003" r="2.6" fill="#f0e8e8"/><path d="M208.4 333.6 h4.8 l-2.4 3 z" fill="#d8d8d8"/></svg>
<div style="left:122.5px;top:362.1px;width:93px;height:30px;background:#454545;"></div>
<div style="left:122.5px;top:362.1px;width:10.8px;height:30px;background:#c04a32;"></div>
<div style="left:134px;top:362.6px;width:72px;height:11.2px;background:#343434;"></div>
<div style="left:206px;top:362.6px;width:9.5px;height:11.2px;background:#3a3a3a;"></div>
<div class="b" style="left:131px;top:363.6px;width:78px;height:10.6px;line-height:10.6px;font-size:8.9px;color:#dedede;text-align:center">ChorusLeadVcl</div>
<div style="left:136.5px;top:377.90000000000003px;width:7.6px;height:10px;background:#4c2626;border-radius:1.5px;"></div>
<div style="left:144.1px;top:377.90000000000003px;width:7.8px;height:10px;background:#5a5a5a;border-radius:1.5px;"></div>
<div class="b" style="left:142.1px;top:378.1px;width:11.8px;height:10px;line-height:10px;font-size:8.8px;color:#c8c8c8;text-align:center;background:none;">I</div>
<div style="left:151.9px;top:377.90000000000003px;width:8.2px;height:10px;background:#484848;border-radius:1.5px;"></div>
<div class="b" style="left:149.9px;top:378.1px;width:12.2px;height:10px;line-height:10px;font-size:8.8px;color:#f0f0f0;text-align:center;background:none;">S</div>
<div style="left:160.1px;top:377.90000000000003px;width:8.9px;height:10px;background:#8a5424;border-radius:1.5px;"></div>
<div class="b" style="left:158.1px;top:378.1px;width:12.9px;height:10px;line-height:10px;font-size:8.8px;color:#b27a48;text-align:center;background:none;">M</div>
<div style="left:170.9px;top:377.1px;width:22.5px;height:11.4px;background:#5a5a5a;border-radius:1.5px;border:1px solid #343434;border-radius:2.5px"></div>
<div class="b" style="left:168.9px;top:377.3px;width:26.5px;height:11.4px;line-height:11.4px;font-size:7.2px;color:#e8e8e8;text-align:center;background:none;letter-spacing:-0.35px;">wave</div>
<div style="left:194.9px;top:377.1px;width:17.6px;height:11.4px;background:#5a5a5a;border-radius:1.5px;border:1px solid #343434;border-radius:2.5px"></div>
<div class="b" style="left:192.9px;top:377.3px;width:21.6px;height:11.4px;line-height:11.4px;font-size:7.2px;color:#3fb565;text-align:center;background:none;letter-spacing:-0.35px;">read</div>
<svg width="220" height="600" viewBox="0 0 220 600"><circle cx="127.9" cy="367.70000000000005" r="3.4" fill="#eaa090"/><path d="M125.9 366.90000000000003 h4 l-2 2.4 z" fill="#2a2a2a"/><rect x="124.6" y="382.90000000000003" width="6.8" height="6.4" fill="#eaa090"/><path d="M125.2 384.3 q3 0 3.2 2 t2.6 2" stroke="#c04a32" stroke-width="1.1" fill="none"/><circle cx="140.3" cy="382.90000000000003" r="2.6" fill="#f0e8e8"/><path d="M208.4 365.1 h4.8 l-2.4 3 z" fill="#d8d8d8"/></svg>
<div style="left:122.5px;top:393.6px;width:93px;height:30px;background:#454545;"></div>
<div style="left:122.5px;top:393.6px;width:10.8px;height:30px;background:#c0327e;"></div>
<div style="left:134px;top:394.1px;width:72px;height:11.2px;background:#343434;"></div>
<div style="left:206px;top:394.1px;width:9.5px;height:11.2px;background:#3a3a3a;"></div>
<div class="b" style="left:131px;top:395.1px;width:78px;height:10.6px;line-height:10.6px;font-size:8.9px;color:#dedede;text-align:center">ChorusBGVocls</div>
<div style="left:136.5px;top:409.40000000000003px;width:7.6px;height:10px;background:#4c2626;border-radius:1.5px;"></div>
<div style="left:144.1px;top:409.40000000000003px;width:7.8px;height:10px;background:#5a5a5a;border-radius:1.5px;"></div>
<div class="b" style="left:142.1px;top:409.6px;width:11.8px;height:10px;line-height:10px;font-size:8.8px;color:#c8c8c8;text-align:center;background:none;">I</div>
<div style="left:151.9px;top:409.40000000000003px;width:8.2px;height:10px;background:#484848;border-radius:1.5px;"></div>
<div class="b" style="left:149.9px;top:409.6px;width:12.2px;height:10px;line-height:10px;font-size:8.8px;color:#f0f0f0;text-align:center;background:none;">S</div>
<div style="left:160.1px;top:409.40000000000003px;width:8.9px;height:10px;background:#8a5424;border-radius:1.5px;"></div>
<div class="b" style="left:158.1px;top:409.6px;width:12.9px;height:10px;line-height:10px;font-size:8.8px;color:#b27a48;text-align:center;background:none;">M</div>
<div style="left:170.9px;top:408.6px;width:22.5px;height:11.4px;background:#5a5a5a;border-radius:1.5px;border:1px solid #343434;border-radius:2.5px"></div>
<div class="b" style="left:168.9px;top:408.8px;width:26.5px;height:11.4px;line-height:11.4px;font-size:7.2px;color:#e8e8e8;text-align:center;background:none;letter-spacing:-0.35px;">wave</div>
<div style="left:194.9px;top:408.6px;width:17.6px;height:11.4px;background:#5a5a5a;border-radius:1.5px;border:1px solid #343434;border-radius:2.5px"></div>
<div class="b" style="left:192.9px;top:408.8px;width:21.6px;height:11.4px;line-height:11.4px;font-size:7.2px;color:#3fb565;text-align:center;background:none;letter-spacing:-0.35px;">read</div>
<svg width="220" height="600" viewBox="0 0 220 600"><circle cx="127.9" cy="399.20000000000005" r="3.4" fill="#ea98c8"/><path d="M125.9 398.40000000000003 h4 l-2 2.4 z" fill="#2a2a2a"/><rect x="124.6" y="414.40000000000003" width="6.8" height="6.4" fill="#ea98c8"/><path d="M125.2 415.8 q3 0 3.2 2 t2.6 2" stroke="#c0327e" stroke-width="1.1" fill="none"/><circle cx="140.3" cy="414.40000000000003" r="2.6" fill="#f0e8e8"/><path d="M208.4 396.6 h4.8 l-2.4 3 z" fill="#d8d8d8"/></svg>
<div style="left:122.5px;top:425.1px;width:93px;height:30px;background:#454545;"></div>
<div style="left:122.5px;top:425.1px;width:10.8px;height:30px;background:#c0327e;"></div>
<div style="left:134px;top:425.6px;width:72px;height:11.2px;background:#343434;"></div>
<div style="left:206px;top:425.6px;width:9.5px;height:11.2px;background:#3a3a3a;"></div>
<div class="b" style="left:131px;top:426.6px;width:78px;height:10.6px;line-height:10.6px;font-size:8.9px;color:#dedede;text-align:center">HarmonyVocals</div>
<div style="left:136.5px;top:440.90000000000003px;width:7.6px;height:10px;background:#4c2626;border-radius:1.5px;"></div>
<div style="left:144.1px;top:440.90000000000003px;width:7.8px;height:10px;background:#5a5a5a;border-radius:1.5px;"></div>
<div class="b" style="left:142.1px;top:441.1px;width:11.8px;height:10px;line-height:10px;font-size:8.8px;color:#c8c8c8;text-align:center;background:none;">I</div>
<div style="left:151.9px;top:440.90000000000003px;width:8.2px;height:10px;background:#484848;border-radius:1.5px;"></div>
<div class="b" style="left:149.9px;top:441.1px;width:12.2px;height:10px;line-height:10px;font-size:8.8px;color:#f0f0f0;text-align:center;background:none;">S</div>
<div style="left:160.1px;top:440.90000000000003px;width:8.9px;height:10px;background:#8a5424;border-radius:1.5px;"></div>
<div class="b" style="left:158.1px;top:441.1px;width:12.9px;height:10px;line-height:10px;font-size:8.8px;color:#b27a48;text-align:center;background:none;">M</div>
<div style="left:170.9px;top:440.1px;width:22.5px;height:11.4px;background:#5a5a5a;border-radius:1.5px;border:1px solid #343434;border-radius:2.5px"></div>
<div class="b" style="left:168.9px;top:440.3px;width:26.5px;height:11.4px;line-height:11.4px;font-size:7.2px;color:#e8e8e8;text-align:center;background:none;letter-spacing:-0.35px;">wave</div>
<div style="left:194.9px;top:440.1px;width:17.6px;height:11.4px;background:#5a5a5a;border-radius:1.5px;border:1px solid #343434;border-radius:2.5px"></div>
<div class="b" style="left:192.9px;top:440.3px;width:21.6px;height:11.4px;line-height:11.4px;font-size:7.2px;color:#3fb565;text-align:center;background:none;letter-spacing:-0.35px;">read</div>
<svg width="220" height="600" viewBox="0 0 220 600"><circle cx="127.9" cy="430.70000000000005" r="3.4" fill="#ea98c8"/><path d="M125.9 429.90000000000003 h4 l-2 2.4 z" fill="#2a2a2a"/><rect x="124.6" y="445.90000000000003" width="6.8" height="6.4" fill="#ea98c8"/><path d="M125.2 447.3 q3 0 3.2 2 t2.6 2" stroke="#c0327e" stroke-width="1.1" fill="none"/><circle cx="140.3" cy="445.90000000000003" r="2.6" fill="#f0e8e8"/><path d="M208.4 428.1 h4.8 l-2.4 3 z" fill="#d8d8d8"/></svg>
<div style="left:122.5px;top:456.6px;width:93px;height:30px;background:#454545;"></div>
<div style="left:122.5px;top:456.6px;width:10.8px;height:30px;background:#c8743a;"></div>
<div style="left:134px;top:457.1px;width:72px;height:11.2px;background:#343434;"></div>
<div style="left:206px;top:457.1px;width:9.5px;height:11.2px;background:#3a3a3a;"></div>
<div class="b" style="left:131px;top:458.1px;width:78px;height:10.6px;line-height:10.6px;font-size:8.9px;color:#dedede;text-align:center">Echo Vox Loop</div>
<div style="left:136.5px;top:472.40000000000003px;width:7.6px;height:10px;background:#4c2626;border-radius:1.5px;"></div>
<div style="left:144.1px;top:472.40000000000003px;width:7.8px;height:10px;background:#5a5a5a;border-radius:1.5px;"></div>
<div class="b" style="left:142.1px;top:472.6px;width:11.8px;height:10px;line-height:10px;font-size:8.8px;color:#c8c8c8;text-align:center;background:none;">I</div>
<div style="left:151.9px;top:472.40000000000003px;width:8.2px;height:10px;background:#484848;border-radius:1.5px;"></div>
<div class="b" style="left:149.9px;top:472.6px;width:12.2px;height:10px;line-height:10px;font-size:8.8px;color:#f0f0f0;text-align:center;background:none;">S</div>
<div style="left:160.1px;top:472.40000000000003px;width:8.9px;height:10px;background:#8a5424;border-radius:1.5px;"></div>
<div class="b" style="left:158.1px;top:472.6px;width:12.9px;height:10px;line-height:10px;font-size:8.8px;color:#b27a48;text-align:center;background:none;">M</div>
<div style="left:170.9px;top:471.6px;width:22.5px;height:11.4px;background:#5a5a5a;border-radius:1.5px;border:1px solid #343434;border-radius:2.5px"></div>
<div class="b" style="left:168.9px;top:471.8px;width:26.5px;height:11.4px;line-height:11.4px;font-size:7.2px;color:#e8e8e8;text-align:center;background:none;letter-spacing:-0.35px;">wave</div>
<div style="left:194.9px;top:471.6px;width:17.6px;height:11.4px;background:#5a5a5a;border-radius:1.5px;border:1px solid #343434;border-radius:2.5px"></div>
<div class="b" style="left:192.9px;top:471.8px;width:21.6px;height:11.4px;line-height:11.4px;font-size:7.2px;color:#3fb565;text-align:center;background:none;letter-spacing:-0.35px;">read</div>
<svg width="220" height="600" viewBox="0 0 220 600"><circle cx="127.9" cy="462.20000000000005" r="3.4" fill="#eec09c"/><path d="M125.9 461.40000000000003 h4 l-2 2.4 z" fill="#2a2a2a"/><rect x="124.6" y="477.40000000000003" width="6.8" height="6.4" fill="#eec09c"/><path d="M125.2 478.8 q3 0 3.2 2 t2.6 2" stroke="#c8743a" stroke-width="1.1" fill="none"/><circle cx="140.3" cy="477.40000000000003" r="2.6" fill="#f0e8e8"/><path d="M208.4 459.6 h4.8 l-2.4 3 z" fill="#d8d8d8"/></svg>
<svg width="220" height="600" viewBox="0 0 220 600"><path d="M112 492 H139.5 L141.5 496 H112 Z" fill="#58b848"/></svg>
<div style="left:112px;top:496px;width:92.5px;height:31.3px;background:#58b848;"></div>
<div style="left:204.5px;top:496px;width:11px;height:31.3px;background:#4a4a4a;"></div>
<div style="left:141px;top:495.7px;width:75px;height:1.3px;background:#58b848;"></div>
<div style="left:206.6px;top:498.2px;width:4.6px;height:3.6px;background:#2c4a22;border:0.5px solid #222"></div>
<div style="left:206.6px;top:503.4px;width:4.6px;height:3.6px;background:#5e4a26;border:0.5px solid #222"></div>
<div style="left:122.8px;top:508.4px;width:80.6px;height:17.4px;background:#469438;"></div>
<div style="left:123.3px;top:498px;width:78.8px;height:10.2px;background:#4e4e50;border:1px solid #2c2c44"></div>
<div class="b" style="left:123.3px;top:497.9px;width:78.8px;height:10.2px;line-height:10.2px;font-size:8.9px;color:#d2d2d2;text-align:center">Effects Returns</div>
<div style="left:125.4px;top:512.6px;width:9px;height:10.2px;background:#4a4a40;border-radius:1.5px;"></div>
<div class="b" style="left:123.4px;top:512.8000000000001px;width:13px;height:10.2px;line-height:10.2px;font-size:8.8px;color:#f0f0f0;text-align:center;background:none;">S</div>
<div style="left:134.4px;top:512.6px;width:9.4px;height:10.2px;background:#8a5424;border-radius:1.5px;"></div>
<div class="b" style="left:132.4px;top:512.8000000000001px;width:13.4px;height:10.2px;line-height:10.2px;font-size:8.8px;color:#b27a48;text-align:center;background:none;">M</div>
<div style="left:146.4px;top:512.4px;width:55.8px;height:10.6px;background:#5c7a54;border-radius:1.5px;border-radius:2.5px;border:1px solid #00000030"></div>
<div class="b" style="left:144.4px;top:512.6px;width:59.8px;height:10.6px;line-height:10.6px;font-size:7.2px;color:#f0f0f0;text-align:center;background:none;letter-spacing:-0.35px;">overview</div>
<svg width="220" height="600" viewBox="0 0 220 600"><circle cx="117.1" cy="501.8" r="3.5" fill="#c4f0b8"/><path d="M115.1 501 h4 l-2 2.4 z" fill="#3a3a2a"/><path d="M114.4 518 h2.4 l0.6 0.8 h3.6 v4.4 h-6.6 z" fill="#c4f0b8"/></svg>
<div style="left:112px;top:527px;width:2.2px;height:73px;background:#56b646;"></div>
<div style="left:122.5px;top:528.4px;width:93px;height:30px;background:#454545;"></div>
<div style="left:122.5px;top:528.4px;width:10.8px;height:30px;background:#55b444;"></div>
<div style="left:134px;top:528.9px;width:81.5px;height:11.2px;background:#343434;"></div>
<div class="b" style="left:134px;top:529.9px;width:81px;height:10.6px;line-height:10.6px;font-size:8.9px;color:#dedede;text-align:center">xReverb</div>
<div style="left:144.1px;top:544.1999999999999px;width:0px;height:0px;background:none;border-radius:1.5px;"></div>
<div style="left:150.2px;top:543.6999999999999px;width:18.4px;height:11px;background:#2c2c2c;border-radius:2px"></div>
<div style="left:150.8px;top:544.1999999999999px;width:8.2px;height:10px;background:#4a4a4a;border-radius:1.5px;"></div>
<div class="b" style="left:148.8px;top:544.4px;width:12.2px;height:10px;line-height:10px;font-size:8px;color:#808080;text-align:center;background:none;">S</div>
<div style="left:159.4px;top:544.1999999999999px;width:8.6px;height:10px;background:#3c3c3c;border-radius:1.5px;"></div>
<div class="b" style="left:157.4px;top:544.4px;width:12.6px;height:10px;line-height:10px;font-size:8.4px;color:#f0f0f0;text-align:center;background:none;">M</div>
<div style="left:161.5px;top:543.5999999999999px;width:21.7px;height:11px;background:none;border-radius:1.5px;"></div>
<div style="left:170.9px;top:543.4px;width:22.5px;height:11.4px;background:#5a5a5a;border-radius:1.5px;border:1px solid #343434;border-radius:2.5px"></div>
<div class="b" style="left:168.9px;top:543.6px;width:26.5px;height:11.4px;line-height:11.4px;font-size:7.2px;color:#e8e8e8;text-align:center;background:none;letter-spacing:-0.35px;">vol</div>
<div style="left:194.9px;top:543.4px;width:17.6px;height:11.4px;background:#5a5a5a;border-radius:1.5px;border:1px solid #343434;border-radius:2.5px"></div>
<div class="b" style="left:192.9px;top:543.6px;width:21.6px;height:11.4px;line-height:11.4px;font-size:7.2px;color:#3fb565;text-align:center;background:none;letter-spacing:-0.35px;">read</div>
<svg width="220" height="600" viewBox="0 0 220 600"><circle cx="127.9" cy="534.0" r="3.4" fill="#b4e4a6"/><path d="M125.9 533.1999999999999 h4 l-2 2.4 z" fill="#2a2a2a"/><rect x="124.6" y="549.1999999999999" width="6.8" height="6.4" fill="#b4e4a6"/><path d="M125.2 550.6 q3 0 3.2 2 t2.6 2" stroke="#55b444" stroke-width="1.1" fill="none"/></svg>
<div style="left:122.5px;top:559.9px;width:93px;height:30px;background:#454545;"></div>
<div style="left:122.5px;top:559.9px;width:10.8px;height:30px;background:#55b444;"></div>
<div style="left:134px;top:560.4px;width:81.5px;height:11.2px;background:#343434;"></div>
<div class="b" style="left:134px;top:561.4px;width:81px;height:10.6px;line-height:10.6px;font-size:8.9px;color:#dedede;text-align:center">xDelay</div>
<div style="left:144.1px;top:575.6999999999999px;width:0px;height:0px;background:none;border-radius:1.5px;"></div>
<div style="left:150.2px;top:575.1999999999999px;width:18.4px;height:11px;background:#2c2c2c;border-radius:2px"></div>
<div style="left:150.8px;top:575.6999999999999px;width:8.2px;height:10px;background:#4a4a4a;border-radius:1.5px;"></div>
<div class="b" style="left:148.8px;top:575.9px;width:12.2px;height:10px;line-height:10px;font-size:8px;color:#808080;text-align:center;background:none;">S</div>
<div style="left:159.4px;top:575.6999999999999px;width:8.6px;height:10px;background:#3c3c3c;border-radius:1.5px;"></div>
<div class="b" style="left:157.4px;top:575.9px;width:12.6px;height:10px;line-height:10px;font-size:8.4px;color:#f0f0f0;text-align:center;background:none;">M</div>
<div style="left:161.5px;top:575.0999999999999px;width:21.7px;height:11px;background:none;border-radius:1.5px;"></div>
<div style="left:170.9px;top:574.9px;width:22.5px;height:11.4px;background:#5a5a5a;border-radius:1.5px;border:1px solid #343434;border-radius:2.5px"></div>
<div class="b" style="left:168.9px;top:575.1px;width:26.5px;height:11.4px;line-height:11.4px;font-size:7.2px;color:#e8e8e8;text-align:center;background:none;letter-spacing:-0.35px;">vol</div>
<div style="left:194.9px;top:574.9px;width:17.6px;height:11.4px;background:#5a5a5a;border-radius:1.5px;border:1px solid #343434;border-radius:2.5px"></div>
<div class="b" style="left:192.9px;top:575.1px;width:21.6px;height:11.4px;line-height:11.4px;font-size:7.2px;color:#3fb565;text-align:center;background:none;letter-spacing:-0.35px;">read</div>
<svg width="220" height="600" viewBox="0 0 220 600"><circle cx="127.9" cy="565.5" r="3.4" fill="#b4e4a6"/><path d="M125.9 564.6999999999999 h4 l-2 2.4 z" fill="#2a2a2a"/><rect x="124.6" y="580.6999999999999" width="6.8" height="6.4" fill="#b4e4a6"/><path d="M125.2 582.1 q3 0 3.2 2 t2.6 2" stroke="#55b444" stroke-width="1.1" fill="none"/></svg>
<div style="left:122.5px;top:591.4px;width:93px;height:30px;background:#454545;"></div>
<div style="left:122.5px;top:591.4px;width:10.8px;height:30px;background:#55b444;"></div>
<div style="left:134px;top:591.9px;width:81.5px;height:11.2px;background:#343434;"></div>
<div class="b" style="left:134px;top:592.9px;width:81px;height:10.6px;line-height:10.6px;font-size:8.9px;color:#dedede;text-align:center">xDelay 1/4</div>
<div style="left:144.1px;top:607.1999999999999px;width:0px;height:0px;background:none;border-radius:1.5px;"></div>
<div style="left:150.2px;top:606.6999999999999px;width:18.4px;height:11px;background:#2c2c2c;border-radius:2px"></div>
<div style="left:150.8px;top:607.1999999999999px;width:8.2px;height:10px;background:#4a4a4a;border-radius:1.5px;"></div>
<div class="b" style="left:148.8px;top:607.4px;width:12.2px;height:10px;line-height:10px;font-size:8px;color:#808080;text-align:center;background:none;">S</div>
<div style="left:159.4px;top:607.1999999999999px;width:8.6px;height:10px;background:#3c3c3c;border-radius:1.5px;"></div>
<div class="b" style="left:157.4px;top:607.4px;width:12.6px;height:10px;line-height:10px;font-size:8.4px;color:#f0f0f0;text-align:center;background:none;">M</div>
<div style="left:161.5px;top:606.5999999999999px;width:21.7px;height:11px;background:none;border-radius:1.5px;"></div>
<div style="left:170.9px;top:606.4px;width:22.5px;height:11.4px;background:#5a5a5a;border-radius:1.5px;border:1px solid #343434;border-radius:2.5px"></div>
<div class="b" style="left:168.9px;top:606.6px;width:26.5px;height:11.4px;line-height:11.4px;font-size:7.2px;color:#e8e8e8;text-align:center;background:none;letter-spacing:-0.35px;">vol</div>
<div style="left:194.9px;top:606.4px;width:17.6px;height:11.4px;background:#5a5a5a;border-radius:1.5px;border:1px solid #343434;border-radius:2.5px"></div>
<div class="b" style="left:192.9px;top:606.6px;width:21.6px;height:11.4px;line-height:11.4px;font-size:7.2px;color:#3fb565;text-align:center;background:none;letter-spacing:-0.35px;">read</div>
<svg width="220" height="600" viewBox="0 0 220 600"><circle cx="127.9" cy="597.0" r="3.4" fill="#b4e4a6"/><path d="M125.9 596.1999999999999 h4 l-2 2.4 z" fill="#2a2a2a"/><rect x="124.6" y="612.1999999999999" width="6.8" height="6.4" fill="#b4e4a6"/><path d="M125.2 613.6 q3 0 3.2 2 t2.6 2" stroke="#55b444" stroke-width="1.1" fill="none"/></svg>
<div style="left:1059px;top:35.5px;width:42px;height:12px;background:#6b3d3d;"></div>
<div style="left:1101px;top:35.5px;width:99px;height:12px;background:#4c6e42;"></div>
<svg width="1200" height="60" viewBox="0 0 1200 60"><path d="M1100.6 37.6 L1104.3 41.3 L1100.6 45 L1096.9 41.3 Z" fill="#58e04c" stroke="#2a5a26" stroke-width="0.6"/></svg>
<div class="b" style="left:1106.4px;top:35.7px;width:60px;height:12px;line-height:12px;font-size:7.4px;color:#f4f4f4;">Chorus 2</div>
<div style="left:379px;top:47.5px;width:821px;height:13.6px;background:repeating-linear-gradient(90deg,#424242 0,#424242 1.6px,#292929 1.6px,#292929 2.8px);border-top:1.5px solid #3a3a3a;border-bottom:1.5px solid #2e2e2e"></div>
<div style="left:1059px;top:91.6px;width:141px;height:1px;background:#3c3c3c;"></div>
<div style="left:1059px;top:123px;width:141px;height:1px;background:#3c3c3c;"></div>
<div style="left:1059px;top:194.8px;width:141px;height:1px;background:#3c3c3c;"></div>
<div style="left:1059px;top:226.3px;width:141px;height:1px;background:#3c3c3c;"></div>
<div style="left:1059px;top:329.6px;width:141px;height:1px;background:#3c3c3c;"></div>
<div style="left:1059px;top:361.1px;width:141px;height:1px;background:#3c3c3c;"></div>
<div style="left:1059px;top:392.6px;width:141px;height:1px;background:#3c3c3c;"></div>
<div style="left:1059px;top:424.1px;width:141px;height:1px;background:#3c3c3c;"></div>
<div style="left:1059px;top:455.6px;width:141px;height:1px;background:#3c3c3c;"></div>
<div style="left:1059px;top:528px;width:141px;height:72px;background:repeating-linear-gradient(90deg,#5a6052 0,#5a6052 1.8px,#4a5044 1.8px,#4a5044 2.8px);"></div>
<div style="left:1059px;top:535px;width:141px;height:1.4px;background:#5ed85a;"></div>
<div style="left:1059px;top:566.5px;width:141px;height:1.4px;background:#5ed85a;"></div>
<div style="left:1059px;top:597.5px;width:141px;height:1.6px;background:#5ed85a;"></div>
<div style="left:1059px;top:565px;width:141px;height:1px;background:#4c3650;"></div>
<div style="left:1059px;top:596.2px;width:141px;height:1px;background:#4c3650;"></div>
<div style="left:1059px;top:527.5px;width:141px;height:1px;background:#3c3c3c;"></div>
<div style="left:1145.2px;top:49px;width:1px;height:551px;background:#6c6c7a;"></div>
<div style="left:1190.2px;top:49px;width:1px;height:551px;background:#6c6c7a;"></div>
<div style="left:1100.1px;top:47.5px;width:1.2px;height:553px;background:#58d850;"></div>
<div style="left:1059px;top:123px;width:141px;height:9px;background:#545454;border-top:1px solid #3a3a3a;border-bottom:1px solid #3a3a3a"></div>
<div style="left:1059px;top:258px;width:141px;height:8.5px;background:#565656;border-top:1px solid #3a3a3a;border-bottom:1px solid #3a3a3a"></div>
<div style="left:1059px;top:487.3px;width:141px;height:9px;background:#565656;border-top:1px solid #3a3a3a;border-bottom:1px solid #3a3a3a"></div>
<div style="left:1100.7px;top:61px;width:89.5px;height:30.3px;background:repeating-linear-gradient(90deg,#54325a 0,#54325a 1.8px,#402444 1.8px,#402444 2.8px);border:0.6px solid #222;border-radius:1px"></div>
<div class="b" style="left:1103.2px;top:62.3px;width:87.5px;height:10px;line-height:10px;font-size:7.5px;color:#f2f2f2;text-shadow:0 0 1.5px #000,0 0 1.5px #000">Avid_OS_RS_100_Perc_</div>
<svg width="1200" height="600" viewBox="0 0 1200 600"><polygon points="1139.0,82.20 1139.7,81.26 1140.4,80.85 1141.1,80.25 1141.8,80.11 1142.5,80.94 1143.2,81.25 1143.9,81.04 1144.6,82.20 1145.3,81.49 1146.0,80.17 1146.7,80.42 1147.4,79.82 1148.1,80.41 1148.8,80.56 1149.5,81.56 1150.2,82.20 1150.9,81.01 1151.6,80.69 1152.3,80.07 1153.0,80.04 1153.7,80.94 1154.4,80.43 1155.1,81.22 1155.8,82.20 1156.5,81.65 1157.2,80.31 1157.9,80.42 1158.6,79.98 1159.3,79.90 1160.0,80.48 1160.7,80.97 1161.4,82.20 1162.1,81.07 1162.8,80.77 1163.5,79.82 1164.2,79.76 1164.9,80.90 1165.6,81.11 1166.3,81.51 1167.0,82.20 1167.7,81.34 1168.4,80.57 1169.1,80.64 1169.8,80.27 1170.5,80.53 1171.2,80.87 1171.9,81.23 1172.6,82.20 1173.3,80.99 1174.0,80.51 1174.7,79.83 1175.4,79.79 1176.1,79.75 1176.8,80.52 1177.5,81.55 1178.2,82.20 1178.9,80.94 1179.6,80.27 1180.3,80.29 1181.0,79.99 1181.7,80.75 1182.4,80.35 1183.1,81.24 1183.8,82.20 1184.5,81.62 1185.2,80.32 1185.9,79.75 1186.6,80.83 1187.3,80.00 1188.0,80.81 1188.7,81.56 1189.4,82.20 1189.4,83.00 1188.7,83.64 1188.0,84.39 1187.3,85.20 1186.6,84.37 1185.9,85.45 1185.2,84.88 1184.5,83.58 1183.8,83.00 1183.1,83.96 1182.4,84.85 1181.7,84.45 1181.0,85.21 1180.3,84.91 1179.6,84.93 1178.9,84.26 1178.2,83.00 1177.5,83.65 1176.8,84.68 1176.1,85.45 1175.4,85.41 1174.7,85.37 1174.0,84.69 1173.3,84.21 1172.6,83.00 1171.9,83.97 1171.2,84.33 1170.5,84.67 1169.8,84.93 1169.1,84.56 1168.4,84.63 1167.7,83.86 1167.0,83.00 1166.3,83.69 1165.6,84.09 1164.9,84.30 1164.2,85.44 1163.5,85.38 1162.8,84.43 1162.1,84.13 1161.4,83.00 1160.7,84.23 1160.0,84.72 1159.3,85.30 1158.6,85.22 1157.9,84.78 1157.2,84.89 1156.5,83.55 1155.8,83.00 1155.1,83.98 1154.4,84.77 1153.7,84.26 1153.0,85.16 1152.3,85.13 1151.6,84.51 1150.9,84.19 1150.2,83.00 1149.5,83.64 1148.8,84.64 1148.1,84.79 1147.4,85.38 1146.7,84.78 1146.0,85.03 1145.3,83.71 1144.6,83.00 1143.9,84.16 1143.2,83.95 1142.5,84.26 1141.8,85.09 1141.1,84.95 1140.4,84.35 1139.7,83.94 1139.0,83.00" fill="#c27ac6"/></svg>
<svg width="1200" height="600" viewBox="0 0 1200 600"><g fill="none"><path d="M1106.6 80.6 V87.6" stroke="#111" stroke-width="2.2"/><circle cx="1106.6" cy="83.6" r="1.7" stroke="#111" stroke-width="2.2"/><path d="M1106.6 80.8 V87.4" stroke="#f2f2f2" stroke-width="0.9"/><circle cx="1106.6" cy="83.6" r="1.7" stroke="#f2f2f2" stroke-width="0.9"/></g></svg>
<div class="b" style="left:1111.6px;top:79.2px;width:50px;height:10px;line-height:10px;font-size:7.5px;color:#f2f2f2;text-shadow:0 0 1.5px #000,0 0 1.5px #000">-2.0 dB</div>
<div style="left:1191.5px;top:61px;width:10px;height:30.3px;background:repeating-linear-gradient(90deg,#54325a 0,#54325a 1.8px,#402444 1.8px,#402444 2.8px);border:0.6px solid #222;border-radius:1px"></div>
<div class="b" style="left:1194.0px;top:62.3px;width:8px;height:10px;line-height:10px;font-size:7.5px;color:#f2f2f2;text-shadow:0 0 1.5px #000,0 0 1.5px #000">Av</div>
<svg width="1200" height="600" viewBox="0 0 1200 600"><g fill="none"><path d="M1196.6 80.6 V87.6" stroke="#111" stroke-width="2.2"/><circle cx="1196.6" cy="83.6" r="1.7" stroke="#111" stroke-width="2.2"/><path d="M1196.6 80.8 V87.4" stroke="#f2f2f2" stroke-width="0.9"/><circle cx="1196.6" cy="83.6" r="1.7" stroke="#f2f2f2" stroke-width="0.9"/></g></svg>
<div style="left:1100.7px;top:92.5px;width:100px;height:30.3px;background:repeating-linear-gradient(90deg,#30486a 0,#30486a 1.8px,#243852 1.8px,#243852 2.8px);border:0.6px solid #222;border-radius:1px"></div>
<div style="left:1127px;top:97.4px;width:73px;height:6.6px;background:#5d94d6;"></div>
<div style="left:1128px;top:111.6px;width:72px;height:6.8px;background:#5d94d6;"></div>
<div class="b" style="left:1103px;top:93.8px;width:40px;height:10px;line-height:10px;font-size:7.4px;color:#f2f2f2;text-shadow:0 0 1.5px #000,0 0 1.5px #000">808-09</div>
<svg width="1200" height="600" viewBox="0 0 1200 600"><g fill="none"><path d="M1106.6 111.19999999999999 V118.19999999999999" stroke="#111" stroke-width="2.2"/><circle cx="1106.6" cy="114.19999999999999" r="1.7" stroke="#111" stroke-width="2.2"/><path d="M1106.6 111.39999999999999 V118.0" stroke="#f2f2f2" stroke-width="0.9"/><circle cx="1106.6" cy="114.19999999999999" r="1.7" stroke="#f2f2f2" stroke-width="0.9"/></g></svg>
<div class="b" style="left:1112.6px;top:109.6px;width:50px;height:10px;line-height:10px;font-size:7.5px;color:#f2f2f2;text-shadow:0 0 1.5px #000,0 0 1.5px #000">0 dB</div>
<div style="left:1059px;top:133.5px;width:41.5px;height:9px;background:#2c5a7c;border:0.6px solid #1c3c54"></div>
<div style="left:1101px;top:152px;width:83.5px;height:9.6px;background:#396c9c;border:0.6px solid #1e3e5e"></div>
<div style="left:1191px;top:152px;width:10px;height:9.6px;background:#396c9c;border:0.6px solid #1e3e5e"></div>
<div style="left:1059px;top:164.5px;width:41.5px;height:29px;background:repeating-linear-gradient(90deg,#364b60 0,#364b60 1.8px,#2a3b4c 1.8px,#2a3b4c 2.8px);border:0.6px solid #222;border-radius:1px"></div>
<div style="left:1100.7px;top:227.5px;width:84px;height:29px;background:repeating-linear-gradient(90deg,#364b60 0,#364b60 1.8px,#2a3b4c 1.8px,#2a3b4c 2.8px);border:0.6px solid #222;border-radius:1px"></div>
<div style="left:1191px;top:227.5px;width:10px;height:29px;background:repeating-linear-gradient(90deg,#364b60 0,#364b60 1.8px,#2a3b4c 1.8px,#2a3b4c 2.8px);border:0.6px solid #222;border-radius:1px"></div>
<svg width="1200" height="600" viewBox="0 0 1200 600"><g stroke="#6fb0ea" stroke-width="1"><path d="M1064 168.5 H1071"/><path d="M1064 171.5 H1071"/><path d="M1064 175 H1071"/><path d="M1064 181 H1069"/><path d="M1064 189.5 H1069"/><path d="M1078 170 H1098"/><path d="M1078 173 H1098"/><path d="M1078 176 H1098"/><path d="M1078 179 H1098"/><path d="M1078 184 H1098"/></g><g stroke="#6fb0ea" stroke-width="1"><path d="M1108 252 H1121"/><path d="M1115 250 H1122"/><path d="M1123 240.5 H1137"/><path d="M1123 234 H1137"/><path d="M1127 237 H1138"/><path d="M1130 244 H1138"/><path d="M1138 232 H1145"/><path d="M1138 235.5 H1145"/><path d="M1138 239 H1144"/><path d="M1138 252.5 H1144"/><path d="M1146 233 H1158"/><path d="M1146 247 H1158"/><path d="M1146 251.5 H1158"/><path d="M1160 229 H1167"/><path d="M1160 232 H1167"/><path d="M1160 238 H1167"/><path d="M1160 249 H1167"/><path d="M1168 234.5 H1182"/><path d="M1168 237.5 H1182"/><path d="M1168 240.5 H1180"/><path d="M1170 251.5 H1182"/><path d="M1182 232 H1185"/><path d="M1182 236 H1185"/></g></svg>
<div class="b" style="left:1103.5px;top:228.3px;width:40px;height:10px;line-height:10px;font-size:7.4px;color:#f2f2f2;text-shadow:0 0 1.5px #000,0 0 1.5px #000">Synth</div>
<div class="b" style="left:1193px;top:228.3px;width:10px;height:10px;line-height:10px;font-size:7.4px;color:#f2f2f2;text-shadow:0 0 1.5px #000,0 0 1.5px #000">Sy</div>
<div style="left:1059px;top:272.3px;width:45px;height:4.6px;background:#3d8e54;border:0.5px solid #25502f"></div>
<div style="left:1101px;top:277.5px;width:100px;height:4.4px;background:#8c8426;border:0.5px solid #4a4614"></div>
<div style="left:1101px;top:282.3px;width:100px;height:4.4px;background:#3a2c98;border:0.5px solid #1c144c"></div>
<div style="left:1059px;top:286.3px;width:28.5px;height:4.6px;background:#a030a2;border:0.5px solid #501850"></div>
<div style="left:1190.5px;top:291.3px;width:10px;height:4.6px;background:#3a66b0;border:0.5px solid #1c3050"></div>
<div style="left:1059px;top:330.8px;width:45.3px;height:29px;background:repeating-linear-gradient(90deg,#2f6048 0,#2f6048 1.8px,#244c38 1.8px,#244c38 2.8px);border:0.6px solid #222;border-radius:1px"></div>
<svg width="1200" height="600" viewBox="0 0 1200 600"><polygon points="1060.0,345.80 1060.7,344.67 1061.4,343.92 1062.1,343.29 1062.8,343.38 1063.5,343.18 1064.2,344.61 1064.9,344.51 1065.6,344.98 1066.0,345.80 1066.7,344.41 1067.4,344.54 1068.1,343.65 1068.8,343.76 1069.5,343.18 1070.2,343.22 1070.9,344.34 1071.6,344.41 1072.3,344.93 1073.0,345.80 1073.7,345.08 1074.4,345.21 1075.1,344.92 1075.8,345.80 1076.5,345.33 1077.2,345.26 1077.9,345.37 1078.6,345.32 1079.0,345.80 1079.7,344.92 1080.4,343.32 1081.1,342.88 1081.8,343.56 1082.5,342.27 1083.2,343.12 1083.9,343.19 1084.6,344.33 1085.3,344.28 1086.0,345.80 1086.7,344.50 1087.4,344.11 1088.1,344.87 1088.8,345.59 1089.5,345.29 1090.2,344.89 1090.9,344.99 1091.6,345.32 1092.0,345.80 1092.7,345.34 1093.4,344.21 1094.1,344.16 1094.8,343.88 1095.5,342.78 1096.2,343.16 1096.9,343.34 1097.6,342.98 1098.3,342.58 1099.0,343.87 1099.7,342.40 1100.4,344.22 1101.1,343.43 1101.8,343.79 1102.5,345.13 1103.2,345.35 1103.2,347.05 1102.5,347.27 1101.8,348.61 1101.1,348.97 1100.4,348.18 1099.7,350.00 1099.0,348.53 1098.3,349.82 1097.6,349.42 1096.9,349.06 1096.2,349.24 1095.5,349.62 1094.8,348.52 1094.1,348.24 1093.4,348.19 1092.7,347.06 1092.0,346.60 1091.6,347.08 1090.9,347.41 1090.2,347.51 1089.5,347.11 1088.8,346.81 1088.1,347.53 1087.4,348.29 1086.7,347.90 1086.0,346.60 1085.3,348.12 1084.6,348.07 1083.9,349.21 1083.2,349.28 1082.5,350.13 1081.8,348.84 1081.1,349.52 1080.4,349.08 1079.7,347.48 1079.0,346.60 1078.6,347.08 1077.9,347.03 1077.2,347.14 1076.5,347.07 1075.8,346.60 1075.1,347.48 1074.4,347.19 1073.7,347.32 1073.0,346.60 1072.3,347.47 1071.6,347.99 1070.9,348.06 1070.2,349.18 1069.5,349.22 1068.8,348.64 1068.1,348.75 1067.4,347.86 1066.7,347.99 1066.0,346.60 1065.6,347.42 1064.9,347.89 1064.2,347.79 1063.5,349.22 1062.8,349.02 1062.1,349.11 1061.4,348.48 1060.7,347.73 1060.0,346.60" fill="#66c898"/></svg>
<div class="b" style="left:1059.3px;top:331.9px;width:44.5px;height:10px;line-height:10px;font-size:7.4px;color:#f2f2f2;text-shadow:0 0 1.5px #000,0 0 1.5px #000">ox-cm_05-01</div>
<div style="left:1100.7px;top:361.8px;width:100px;height:29.6px;background:repeating-linear-gradient(90deg,#5e5834 0,#5e5834 1.8px,#4c4728 1.8px,#4c4728 2.8px);border:0.6px solid #222;border-radius:1px"></div>
<svg width="1200" height="600" viewBox="0 0 1200 600"><polygon points="1103.0,377.20 1103.7,376.64 1104.4,375.73 1105.1,376.11 1105.8,375.56 1106.5,375.96 1107.2,376.63 1107.9,377.20 1108.0,377.20 1108.7,376.73 1109.4,376.57 1110.1,376.28 1110.8,375.66 1111.5,374.88 1112.2,375.64 1112.9,375.35 1113.6,374.56 1114.3,373.89 1115.0,374.44 1115.7,374.71 1116.4,373.64 1117.1,375.32 1117.8,373.92 1118.5,374.99 1119.2,375.32 1119.9,375.48 1120.6,375.33 1121.3,374.81 1122.0,375.88 1122.7,375.69 1123.4,376.00 1124.1,376.62 1124.8,377.16 1125.0,377.20 1125.7,377.20 1126.4,377.20 1127.1,377.09 1127.8,377.15 1128.5,377.19 1129.2,377.11 1129.9,377.15 1130.6,377.19 1131.3,377.06 1132.0,377.08 1132.7,377.20 1133.4,377.11 1134.1,377.13 1134.8,377.03 1135.5,377.07 1136.2,377.19 1136.9,377.01 1137.6,377.20 1138.3,377.16 1139.0,377.07 1139.7,377.20 1140.4,377.14 1141.1,377.20 1141.8,377.09 1142.5,377.06 1143.2,377.12 1143.9,377.03 1144.6,377.19 1145.3,377.08 1146.0,377.11 1146.7,377.11 1147.4,377.15 1148.1,377.04 1148.8,377.01 1149.0,377.20 1149.7,376.38 1150.4,376.42 1151.1,375.56 1151.8,375.60 1152.5,375.49 1153.2,376.18 1153.9,377.20 1154.0,377.20 1154.7,376.65 1155.4,376.66 1156.1,375.99 1156.8,376.04 1157.5,375.91 1158.2,375.83 1158.9,374.65 1159.6,375.49 1160.3,375.21 1161.0,374.91 1161.7,374.04 1162.4,375.37 1163.1,374.75 1163.8,374.62 1164.5,374.15 1165.2,374.37 1165.9,374.46 1166.6,375.48 1167.3,375.47 1168.0,375.76 1168.7,375.48 1169.4,375.82 1170.1,376.80 1170.8,377.20 1171.0,377.20 1171.7,377.20 1172.4,377.14 1173.1,377.11 1173.8,377.20 1174.5,377.20 1175.2,377.16 1175.9,377.17 1176.6,377.12 1177.3,377.01 1178.0,377.08 1178.7,377.13 1179.4,377.10 1180.1,377.09 1180.8,377.20 1181.5,377.03 1182.2,377.06 1182.9,377.03 1183.6,377.05 1184.3,377.16 1185.0,377.16 1185.7,377.20 1186.4,377.10 1187.1,377.20 1187.8,377.20 1188.5,377.20 1189.2,377.20 1189.9,377.18 1190.6,377.20 1191.3,377.20 1192.0,377.20 1192.7,377.20 1193.4,377.17 1194.0,377.20 1194.7,376.48 1195.4,376.13 1196.1,376.22 1196.8,375.86 1197.5,375.53 1198.2,375.34 1198.9,375.57 1199.6,374.34 1200.3,374.04 1200.3,381.16 1199.6,380.86 1198.9,379.63 1198.2,379.86 1197.5,379.67 1196.8,379.34 1196.1,378.98 1195.4,379.07 1194.7,378.72 1194.0,378.00 1193.4,378.03 1192.7,378.00 1192.0,378.00 1191.3,378.00 1190.6,378.00 1189.9,378.02 1189.2,378.00 1188.5,378.00 1187.8,378.00 1187.1,378.00 1186.4,378.10 1185.7,378.00 1185.0,378.04 1184.3,378.04 1183.6,378.15 1182.9,378.17 1182.2,378.14 1181.5,378.17 1180.8,378.00 1180.1,378.11 1179.4,378.10 1178.7,378.07 1178.0,378.12 1177.3,378.19 1176.6,378.08 1175.9,378.03 1175.2,378.04 1174.5,378.00 1173.8,378.00 1173.1,378.09 1172.4,378.06 1171.7,378.00 1171.0,378.00 1170.8,378.00 1170.1,378.40 1169.4,379.38 1168.7,379.72 1168.0,379.44 1167.3,379.73 1166.6,379.72 1165.9,380.74 1165.2,380.83 1164.5,381.05 1163.8,380.58 1163.1,380.45 1162.4,379.83 1161.7,381.16 1161.0,380.29 1160.3,379.99 1159.6,379.71 1158.9,380.55 1158.2,379.37 1157.5,379.29 1156.8,379.16 1156.1,379.21 1155.4,378.54 1154.7,378.55 1154.0,378.00 1153.9,378.00 1153.2,379.02 1152.5,379.71 1151.8,379.60 1151.1,379.64 1150.4,378.78 1149.7,378.82 1149.0,378.00 1148.8,378.19 1148.1,378.16 1147.4,378.05 1146.7,378.09 1146.0,378.09 1145.3,378.12 1144.6,378.01 1143.9,378.17 1143.2,378.08 1142.5,378.14 1141.8,378.11 1141.1,378.00 1140.4,378.06 1139.7,378.00 1139.0,378.13 1138.3,378.04 1137.6,378.00 1136.9,378.19 1136.2,378.01 1135.5,378.13 1134.8,378.17 1134.1,378.07 1133.4,378.09 1132.7,378.00 1132.0,378.12 1131.3,378.14 1130.6,378.01 1129.9,378.05 1129.2,378.09 1128.5,378.01 1127.8,378.05 1127.1,378.11 1126.4,378.00 1125.7,378.00 1125.0,378.00 1124.8,378.04 1124.1,378.58 1123.4,379.20 1122.7,379.51 1122.0,379.32 1121.3,380.39 1120.6,379.87 1119.9,379.72 1119.2,379.88 1118.5,380.21 1117.8,381.28 1117.1,379.88 1116.4,381.56 1115.7,380.49 1115.0,380.76 1114.3,381.31 1113.6,380.64 1112.9,379.85 1112.2,379.56 1111.5,380.32 1110.8,379.54 1110.1,378.92 1109.4,378.63 1108.7,378.47 1108.0,378.00 1107.9,378.00 1107.2,378.57 1106.5,379.24 1105.8,379.64 1105.1,379.09 1104.4,379.47 1103.7,378.56 1103.0,378.00" fill="#c6b652"/></svg>
<div class="b" style="left:1103.5px;top:363px;width:90px;height:10px;line-height:10px;font-size:7.4px;color:#f2f2f2;text-shadow:0 0 1.5px #000,0 0 1.5px #000">Chorus Lead Vox-05</div>
<svg width="1200" height="600" viewBox="0 0 1200 600"><g fill="none"><path d="M1106.6 381.0 V388.0" stroke="#111" stroke-width="2.2"/><circle cx="1106.6" cy="384.0" r="1.7" stroke="#111" stroke-width="2.2"/><path d="M1106.6 381.2 V387.79999999999995" stroke="#f2f2f2" stroke-width="0.9"/><circle cx="1106.6" cy="384.0" r="1.7" stroke="#f2f2f2" stroke-width="0.9"/></g></svg>
<div class="b" style="left:1112.6px;top:379.4px;width:50px;height:10px;line-height:10px;font-size:7.5px;color:#f2f2f2;text-shadow:0 0 1.5px #000,0 0 1.5px #000">0 dB</div>
<div style="left:1100.7px;top:393.2px;width:100px;height:29.6px;background:repeating-linear-gradient(90deg,#36316a 0,#36316a 1.8px,#2a2656 1.8px,#2a2656 2.8px);border:0.6px solid #222;border-radius:1px"></div>
<svg width="1200" height="600" viewBox="0 0 1200 600"><polygon points="1101.5,408.00 1102.2,406.62 1102.9,406.45 1103.6,405.67 1104.3,407.54 1105.0,406.98 1105.7,405.54 1106.4,406.56 1107.1,406.57 1107.8,407.73 1108.5,406.90 1109.2,406.10 1109.9,405.99 1110.6,407.48 1111.3,406.58 1112.0,406.49 1112.7,406.38 1113.4,407.16 1114.1,407.45 1114.8,405.72 1115.5,405.79 1116.2,406.03 1116.9,407.82 1117.6,406.37 1118.3,406.53 1119.0,406.36 1119.7,406.84 1120.0,407.96 1120.7,408.00 1121.4,408.00 1122.1,408.00 1122.7,408.00 1123.4,406.86 1124.1,405.69 1124.8,406.62 1125.5,406.80 1126.2,407.05 1126.9,406.86 1127.6,406.24 1128.3,406.52 1129.0,407.98 1129.7,406.84 1130.4,405.60 1131.1,406.68 1131.8,406.84 1132.5,407.72 1133.2,406.32 1133.9,405.54 1134.6,406.75 1135.3,407.78 1136.0,407.28 1136.7,406.13 1137.4,406.77 1138.1,407.16 1138.8,407.82 1139.5,406.05 1140.2,406.19 1140.9,406.44 1141.6,407.20 1142.0,408.00 1142.7,407.99 1143.4,408.00 1144.1,407.99 1144.7,408.00 1145.4,407.11 1146.1,406.04 1146.8,406.07 1147.5,407.24 1148.2,407.66 1148.9,405.87 1149.6,405.40 1150.3,406.80 1151.0,407.18 1151.7,406.78 1152.4,406.59 1153.1,405.94 1153.8,407.03 1154.5,407.88 1155.2,406.63 1155.9,406.03 1156.6,405.79 1157.3,407.18 1158.0,407.88 1158.7,406.15 1159.4,405.98 1160.1,406.33 1160.8,407.19 1161.5,407.01 1162.2,406.26 1162.9,406.73 1163.6,406.09 1164.3,407.63 1164.7,408.00 1165.4,408.00 1166.1,408.00 1166.8,408.00 1167.5,408.00 1168.0,408.00 1168.7,406.97 1169.4,405.56 1170.1,406.70 1170.8,406.59 1171.5,407.32 1172.2,406.31 1172.9,405.62 1173.6,406.53 1174.3,407.08 1175.0,407.09 1175.7,406.48 1176.4,405.27 1177.1,406.53 1177.8,407.84 1178.5,406.33 1179.2,406.18 1179.9,405.77 1180.6,407.01 1181.3,407.68 1182.0,406.69 1182.7,406.58 1183.4,405.50 1184.1,407.29 1184.8,406.94 1185.5,405.59 1186.2,405.77 1186.9,406.90 1187.6,407.72 1188.0,408.00 1188.7,408.00 1189.4,407.99 1190.1,407.91 1190.7,408.00 1191.4,407.04 1192.1,406.05 1192.8,406.64 1193.5,407.20 1194.2,407.83 1194.9,406.36 1195.6,406.68 1196.3,406.29 1197.0,406.80 1197.7,407.43 1198.4,406.59 1199.1,405.56 1199.8,406.70 1200.5,406.98 1200.5,409.82 1199.8,410.10 1199.1,411.24 1198.4,410.21 1197.7,409.37 1197.0,410.00 1196.3,410.51 1195.6,410.12 1194.9,410.44 1194.2,408.97 1193.5,409.60 1192.8,410.16 1192.1,410.75 1191.4,409.76 1190.7,408.80 1190.1,408.89 1189.4,408.81 1188.7,408.80 1188.0,408.80 1187.6,409.08 1186.9,409.90 1186.2,411.03 1185.5,411.21 1184.8,409.86 1184.1,409.51 1183.4,411.30 1182.7,410.22 1182.0,410.11 1181.3,409.12 1180.6,409.79 1179.9,411.03 1179.2,410.62 1178.5,410.47 1177.8,408.96 1177.1,410.27 1176.4,411.53 1175.7,410.32 1175.0,409.71 1174.3,409.72 1173.6,410.27 1172.9,411.18 1172.2,410.49 1171.5,409.48 1170.8,410.21 1170.1,410.10 1169.4,411.24 1168.7,409.83 1168.0,408.80 1167.5,408.80 1166.8,408.80 1166.1,408.80 1165.4,408.80 1164.7,408.80 1164.3,409.17 1163.6,410.71 1162.9,410.07 1162.2,410.54 1161.5,409.79 1160.8,409.61 1160.1,410.47 1159.4,410.82 1158.7,410.65 1158.0,408.92 1157.3,409.62 1156.6,411.01 1155.9,410.77 1155.2,410.17 1154.5,408.92 1153.8,409.77 1153.1,410.86 1152.4,410.21 1151.7,410.02 1151.0,409.62 1150.3,410.00 1149.6,411.40 1148.9,410.93 1148.2,409.14 1147.5,409.56 1146.8,410.73 1146.1,410.76 1145.4,409.69 1144.7,408.80 1144.1,408.81 1143.4,408.80 1142.7,408.81 1142.0,408.80 1141.6,409.60 1140.9,410.36 1140.2,410.61 1139.5,410.75 1138.8,408.98 1138.1,409.64 1137.4,410.03 1136.7,410.67 1136.0,409.52 1135.3,409.02 1134.6,410.05 1133.9,411.26 1133.2,410.48 1132.5,409.08 1131.8,409.96 1131.1,410.12 1130.4,411.20 1129.7,409.96 1129.0,408.82 1128.3,410.28 1127.6,410.56 1126.9,409.94 1126.2,409.75 1125.5,410.00 1124.8,410.18 1124.1,411.11 1123.4,409.94 1122.7,408.80 1122.1,408.80 1121.4,408.80 1120.7,408.80 1120.0,408.84 1119.7,409.96 1119.0,410.44 1118.3,410.27 1117.6,410.43 1116.9,408.98 1116.2,410.77 1115.5,411.01 1114.8,411.08 1114.1,409.35 1113.4,409.64 1112.7,410.42 1112.0,410.31 1111.3,410.22 1110.6,409.32 1109.9,410.81 1109.2,410.70 1108.5,409.90 1107.8,409.07 1107.1,410.23 1106.4,410.24 1105.7,411.26 1105.0,409.82 1104.3,409.26 1103.6,411.13 1102.9,410.35 1102.2,410.18 1101.5,408.80" fill="#6e5ee2"/></svg>
<div class="b" style="left:1103.5px;top:394.5px;width:90px;height:10px;line-height:10px;font-size:7.4px;color:#f2f2f2;text-shadow:0 0 1.5px #000,0 0 1.5px #000">Chorus BG-05</div>
<svg width="1200" height="600" viewBox="0 0 1200 600"><g fill="none"><path d="M1106.6 412.40000000000003 V419.40000000000003" stroke="#111" stroke-width="2.2"/><circle cx="1106.6" cy="415.40000000000003" r="1.7" stroke="#111" stroke-width="2.2"/><path d="M1106.6 412.6 V419.2" stroke="#f2f2f2" stroke-width="0.9"/><circle cx="1106.6" cy="415.40000000000003" r="1.7" stroke="#f2f2f2" stroke-width="0.9"/></g></svg>
<div class="b" style="left:1112.6px;top:410.8px;width:50px;height:10px;line-height:10px;font-size:7.5px;color:#f2f2f2;text-shadow:0 0 1.5px #000,0 0 1.5px #000">0 dB</div>
<div style="left:1059px;top:425.3px;width:29px;height:29.5px;background:repeating-linear-gradient(90deg,#5e3666 0,#5e3666 1.8px,#4a2852 1.8px,#4a2852 2.8px);border:0.6px solid #222;border-radius:1px"></div>
<div style="left:1060px;top:431.6px;width:27px;height:1px;background:#b860b8;"></div>
<div style="left:1062px;top:430.8px;width:6px;height:2.6px;background:#c86cc8;border-radius:1.3px"></div>
<div style="left:1070px;top:431px;width:5px;height:2.2px;background:#c86cc8;border-radius:1.1px"></div>
<div style="left:1060px;top:446.2px;width:27px;height:1px;background:#b860b8;"></div>
<div style="left:1061.5px;top:445.4px;width:6.5px;height:2.6px;background:#c86cc8;border-radius:1.3px"></div>
<div style="left:1070.5px;top:445.6px;width:5px;height:2.2px;background:#c86cc8;border-radius:1.1px"></div>
<div style="left:1190.3px;top:456.3px;width:11px;height:29.4px;background:repeating-linear-gradient(90deg,#30486a 0,#30486a 1.8px,#243852 1.8px,#243852 2.8px);border:0.6px solid #222;border-radius:1px"></div>
<div class="b" style="left:1192.8px;top:457.6px;width:9px;height:10px;line-height:10px;font-size:7.5px;color:#f2f2f2;text-shadow:0 0 1.5px #000,0 0 1.5px #000">Av</div>
<div style="left:1199px;top:474.6px;width:2px;height:5px;background:#5d94d6;"></div>
<svg width="1200" height="600" viewBox="0 0 1200 600"><g fill="none"><path d="M1196.2 473.6 V480.6" stroke="#111" stroke-width="2.2"/><circle cx="1196.2" cy="476.6" r="1.7" stroke="#111" stroke-width="2.2"/><path d="M1196.2 473.8 V480.4" stroke="#f2f2f2" stroke-width="0.9"/><circle cx="1196.2" cy="476.6" r="1.7" stroke="#f2f2f2" stroke-width="0.9"/></g></svg>
<div style="left:1062.6px;top:0px;width:1.1px;height:60px;background:#c8352c;"></div>
<div style="left:215.5px;top:560px;width:163.5px;height:40px;background:#3c3c3c;"></div>
<div style="left:215.5px;top:559px;width:163.5px;height:1px;background:#1a1a1a;"></div>
<div style="left:215.5px;top:590.5px;width:163.5px;height:1.2px;background:#151515;"></div>
<div style="left:215.5px;top:591.7px;width:163.5px;height:9px;background:#353535;"></div>
<div style="left:216.5px;top:560px;width:9px;height:30px;background:repeating-linear-gradient(90deg,#464218 0,#464218 3.4px,#26261a 3.4px,#26261a 4.4px);"></div>
<div style="left:216.5px;top:592px;width:9px;height:8px;background:repeating-linear-gradient(90deg,#4c2016 0,#4c2016 3.4px,#261a1a 3.4px,#261a1a 4.4px);"></div>
<svg width="1200" height="600" viewBox="0 0 1200 600"><circle cx="249.5" cy="598" r="1.7" fill="#c8c8c8"/><rect x="256.2" y="594" width="7.2" height="6" rx="1.5" fill="#4c4c4c"/><circle cx="259.8" cy="598" r="1.7" fill="#c8c8c8"/><rect x="266.4" y="594" width="7.2" height="6" rx="1.5" fill="#4c4c4c"/><circle cx="270" cy="598" r="1.7" fill="#c8c8c8"/><circle cx="280.5" cy="598" r="1.7" fill="#c8c8c8"/><circle cx="290.5" cy="598" r="1.7" fill="#c8c8c8"/><path d="M301.8 598 h4.4 M304 595.8 v4.4" stroke="#bdbdbd" stroke-width="1.6"/><path d="M312.3 598 h4.4 M314.5 595.8 v4.4" stroke="#bdbdbd" stroke-width="1.6"/><path d="M322.6 598 h4.4 M324.8 595.8 v4.4" stroke="#bdbdbd" stroke-width="1.6"/><path d="M332.8 598 h4.4 M335 595.8 v4.4" stroke="#bdbdbd" stroke-width="1.6"/><path d="M343.3 598 h4.4 M345.5 595.8 v4.4" stroke="#bdbdbd" stroke-width="1.6"/><rect x="355" y="593.5" width="11" height="8" rx="2" fill="#555"/><rect x="357.5" y="596" width="5.5" height="5" fill="none" stroke="#ddd" stroke-width="1.2"/><rect x="355" y="583" width="11" height="6" rx="2" fill="#4a4a4a"/></svg>
<div style="left:379px;top:582px;width:680px;height:18px;background:repeating-linear-gradient(90deg,#5a6052 0,#5a6052 1.8px,#4a5044 1.8px,#4a5044 2.8px);"></div>
<div style="left:379px;top:589.6px;width:680px;height:1px;background:#3a3d38;"></div>
<div style="left:379px;top:596.2px;width:680px;height:1px;background:#4c3650;"></div>
<div style="left:424.0px;top:582px;width:1px;height:18px;background:#62626e;"></div>
<div style="left:469.07px;top:582px;width:1px;height:18px;background:#7ab830;"></div>
<div style="left:514.14px;top:582px;width:1px;height:18px;background:#62626e;"></div>
<div style="left:559.21px;top:582px;width:1px;height:18px;background:#62626e;"></div>
<div style="left:604.28px;top:582px;width:1px;height:18px;background:#62626e;"></div>
<div style="left:649.35px;top:582px;width:1px;height:18px;background:#62626e;"></div>
<div style="left:694.4200000000001px;top:582px;width:1px;height:18px;background:#62626e;"></div>
<div style="left:739.49px;top:582px;width:1px;height:18px;background:#62626e;"></div>
<div style="left:784.56px;top:582px;width:1px;height:18px;background:#62626e;"></div>
<div style="left:829.63px;top:582px;width:1px;height:18px;background:#62626e;"></div>
<div style="left:874.7px;top:582px;width:1px;height:18px;background:#62626e;"></div>
<div style="left:919.77px;top:582px;width:1px;height:18px;background:#62626e;"></div>
<div style="left:964.84px;top:582px;width:1px;height:18px;background:#62626e;"></div>
<div style="left:1009.91px;top:582px;width:1px;height:18px;background:#62626e;"></div>
<div style="left:1054.98px;top:582px;width:1px;height:18px;background:#62626e;"></div>
<div style="left:739.4px;top:582px;width:1.2px;height:18px;background:#4a3cf0;"></div>
<div style="left:829.5px;top:582px;width:1px;height:16px;background:#d04040;"></div>
<div style="left:379px;top:597.6px;width:680px;height:1.6px;background:#5ed85a;"></div>
<div style="left:378.8px;top:582px;width:1.2px;height:18px;background:#38b8b0;"></div>
<div style="left:216.0px;top:15.0px;width:844px;height:568px;background:#2b2b2b;border-radius:6px 6px 6px 6px;box-shadow:0 6px 11px 2px rgba(0,0,0,.3);border:1px solid #5a5a5a;border-bottom:none"></div>
<div style="left:216.5px;top:15.5px;width:843px;height:15px;background:#3f3f3f;border-radius:5px 5px 0 0;border-top:1px solid #6a6a6a"></div>
<div style="left:216.5px;top:30.3px;width:843px;height:11px;background:#262626;"></div>
<div style="left:216.5px;top:41.3px;width:843px;height:31.2px;background:#333333;"></div>
<div style="left:216.5px;top:72.3px;width:843px;height:18.5px;background:#313131;border-top:1px solid #282828"></div>
<div style="left:316.3px;top:30.5px;width:1px;height:42px;background:#2a2a2a;"></div>
<div style="left:317.3px;top:41.3px;width:1px;height:31px;background:#3a3a3a;"></div>
<div style="left:405.3px;top:30.5px;width:1px;height:42px;background:#2a2a2a;"></div>
<div style="left:406.3px;top:41.3px;width:1px;height:31px;background:#3a3a3a;"></div>
<div style="left:435.8px;top:30.5px;width:1px;height:42px;background:#2a2a2a;"></div>
<div style="left:436.8px;top:41.3px;width:1px;height:31px;background:#3a3a3a;"></div>
<div style="left:1041.8px;top:30.5px;width:1px;height:42px;background:#2a2a2a;"></div>
<div style="left:1042.8px;top:41.3px;width:1px;height:31px;background:#3a3a3a;"></div>
<svg width="1200" height="100" viewBox="0 0 1200 100"><circle cx="224" cy="23" r="3.5" fill="#5c5c5c"/><circle cx="234.8" cy="23" r="3.5" fill="#5c5c5c"/><circle cx="396.7" cy="36.3" r="3.8" fill="#9a9a9a"/><path d="M394.6 35.4 h4.2 l-2.1 2.4 z" fill="#2a2a2a"/></svg>
<div class="b" style="left:222.8px;top:32px;width:40px;height:11px;line-height:11px;font-size:8.4px;color:#e4e4e4;">Track</div>
<div class="b" style="left:320.6px;top:32px;width:40px;height:11px;line-height:11px;font-size:8.4px;color:#e4e4e4;">Preset</div>
<div class="b" style="left:411px;top:32px;width:40px;height:11px;line-height:11px;font-size:8.4px;color:#e4e4e4;">Auto</div>
<div style="left:222.3px;top:45px;width:70px;height:10.8px;background:#262626;border-radius:2px;border-bottom:1px solid #3e3e3e"></div>
<div class="b" style="left:222.3px;top:45.9px;width:66px;height:10.8px;line-height:10.8px;font-size:7.4px;color:#dcdcdc;text-align:center;">Piano</div>
<svg width="1200" height="100" viewBox="0 0 1200 100"><path d="M286.1 46.9 h5.8 l-2.9 3.3 z" fill="#9c9c9c"/></svg>
<div style="left:295.3px;top:45px;width:16px;height:10.8px;background:#262626;border-radius:2px;border-bottom:1px solid #3e3e3e"></div>
<div class="b" style="left:295.3px;top:45.9px;width:9px;height:10.8px;line-height:10.8px;font-size:7.4px;color:#dcdcdc;text-align:center;">a</div>
<svg width="1200" height="100" viewBox="0 0 1200 100"><path d="M305.1 46.9 h5.8 l-2.9 3.3 z" fill="#9c9c9c"/></svg>
<div style="left:222.3px;top:58px;width:89px;height:10.8px;background:#262626;border-radius:2px;border-bottom:1px solid #3e3e3e"></div>
<div class="b" style="left:222.3px;top:58.9px;width:85px;height:10.8px;line-height:10.8px;font-size:7.4px;color:#dcdcdc;text-align:center;">TATAT</div>
<svg width="1200" height="100" viewBox="0 0 1200 100"><path d="M305.1 59.9 h5.8 l-2.9 3.3 z" fill="#9c9c9c"/></svg>
<div style="left:319.6px;top:45px;width:81.3px;height:10.8px;background:#262626;border-radius:2px;border-bottom:1px solid #3e3e3e"></div>
<div class="b" style="left:319.6px;top:45.9px;width:75.3px;height:10.8px;line-height:10.8px;font-size:6.8px;color:#dcdcdc;text-align:center;letter-spacing:-0.1px">&lt;factory default&gt;</div>
<svg width="1200" height="100" viewBox="0 0 1200 100"><path d="M394.70000000000005 46.9 h5.8 l-2.9 3.3 z" fill="#9c9c9c"/></svg>
<div style="left:319.8px;top:58.2px;width:11px;height:10.8px;background:#454545;border-radius:1.5px"></div>
<div class="b" style="left:319.8px;top:58.6px;width:11px;height:10.8px;line-height:10.8px;font-size:8px;color:#b8b8b8;text-align:center">-</div>
<div style="left:331.4px;top:58.2px;width:10.8px;height:10.8px;background:#454545;border-radius:1.5px"></div>
<div class="b" style="left:331.4px;top:58.8px;width:10.8px;height:10.8px;line-height:10.8px;font-size:8px;color:#b8b8b8;text-align:center">+</div>
<div style="left:342.8px;top:58.2px;width:11.4px;height:10.8px;background:#454545;border-radius:1.5px"></div>
<div style="left:357.8px;top:58.6px;width:41px;height:10.2px;background:#3e3e3e;border-radius:1.5px"></div>
<div class="b" style="left:357.8px;top:59.6px;width:41px;height:10.2px;line-height:10.2px;font-size:7.3px;color:#f4f4f4;text-align:center;letter-spacing:-0.3px">COMPARE</div>
<div style="left:409.2px;top:45px;width:21.8px;height:10.8px;background:#505050;border-radius:2px"></div>
<div style="left:409.8px;top:58.6px;width:20.6px;height:10.2px;background:#3e3e3e;border-radius:1.5px"></div>
<div class="b" style="left:409.8px;top:59.6px;width:20.6px;height:10.2px;line-height:10.2px;font-size:7.3px;color:#f4f4f4;text-align:center;letter-spacing:-0.2px">SAFE</div>
<div style="left:441.3px;top:45.4px;width:33.8px;height:10.2px;background:#3e3e3e;border-radius:1.5px"></div>
<div class="b" style="left:441.3px;top:46.3px;width:33.8px;height:10.2px;line-height:10.2px;font-size:7.3px;color:#f4f4f4;text-align:center;letter-spacing:-0.35px">BYPASS</div>
<div style="left:441px;top:58.4px;width:34.8px;height:10.6px;background:#3e3e3e;border-radius:1.5px"></div>
<div class="b" style="left:441px;top:59.4px;width:34.8px;height:10.6px;line-height:10.6px;font-size:7.2px;color:#f4f4f4;text-align:center;letter-spacing:-0.25px">Native</div>
<svg width="1200" height="100" viewBox="0 0 1200 100"><rect x="344.8" y="60.4" width="5.6" height="4.4" fill="none" stroke="#f0f0f0" stroke-width="1.1"/><rect x="346.59999999999997" y="62.800000000000004" width="5.6" height="4.2" fill="#505050" stroke="#f0f0f0" stroke-width="1.1"/><rect x="416.6" y="47.199999999999996" width="5.6" height="4.4" fill="none" stroke="#f0f0f0" stroke-width="1.1"/><rect x="418.4" y="49.6" width="5.6" height="4.2" fill="#505050" stroke="#f0f0f0" stroke-width="1.1"/></svg>
<div style="left:1045.3px;top:32.2px;width:11px;height:6px;background:#5a1c18;border:1px solid #1a1a1a;border-radius:1.5px"></div>
<div style="left:1046.3px;top:45.3px;width:10.2px;height:11.2px;background:#d8433c;border-radius:2px;border:1px solid #8a2622"></div>
<div style="left:1048.9px;top:48.6px;width:5px;height:5px;background:none;border:1px solid #ffd8d0"></div>
<div style="left:222px;top:75.8px;width:78px;height:10.4px;background:#252525;border-radius:2px"></div>
<div class="b" style="left:223.2px;top:77.2px;width:80px;height:10.4px;line-height:10.4px;font-size:6.9px;color:#f4f4f4;letter-spacing:-0.1px">MIDI Node: [A] TATAT 1</div>
<div style="left:216.5px;top:90.8px;width:843px;height:491.7px;background:#dcddde;border-radius:0 0 6px 6px"></div>
<div style="left:216.5px;top:139px;width:355.8px;height:207.8px;background:#eef0f0;"></div>
<div style="left:575px;top:139px;width:302px;height:207.8px;background:#eef0f0;"></div>
<div style="left:880px;top:139px;width:179.5px;height:207.8px;background:#eef0f0;"></div>
<div style="left:216.5px;top:349.6px;width:478px;height:208.2px;background:#eef0f0;"></div>
<div style="left:698px;top:349.6px;width:361.5px;height:208.2px;background:#eef0f0;"></div>
<svg width="1200" height="600" viewBox="0 0 1200 600"><path d="M225 100 H252 V127 H225 Z" fill="#b3391f"/><path d="M225 107.2 L237.4 100 H243.2 L232.4 109.2 L247.6 127 H240.6 L225 112.6 Z" fill="#dcddde"/><path d="M266.2 100.6 L283.4 110.6 L266.2 120.4 Z" fill="#b3391f"/><path d="M260.6 103.8 V125.6 L280.2 114.2 L279 112.6 M260.6 103.8 L266.2 107" fill="none" stroke="#b3391f" stroke-width="1.0"/><text class="lt" x="505.8" y="117.4" font-size="13" fill="#b3391f" text-anchor="middle" textLength="9" lengthAdjust="spacingAndGlyphs" stroke="#b3391f" stroke-width="0.4" >&lt;</text><text class="lt" x="637.8" y="117.5" font-size="13.4" fill="#b3391f" text-anchor="middle" textLength="20.4" lengthAdjust="spacingAndGlyphs" stroke="#b3391f" stroke-width="0.4" >init</text><text class="lt" x="769.3" y="117.4" font-size="13" fill="#b3391f" text-anchor="middle" textLength="9" lengthAdjust="spacingAndGlyphs" stroke="#b3391f" stroke-width="0.4" >&gt;</text><text class="lt" x="225.6" y="158.4" font-size="12.7" fill="#3c3c3c" text-anchor="start" textLength="29.6" lengthAdjust="spacingAndGlyphs" stroke="#3c3c3c" stroke-width="0.22" >TIME</text><path d="M261.4 163.8 L265.6 151 L265.2 163.8 L271.8 151 L272.2 163.8 L285.3 151 L285.5 163.8 L311.8 151 V163.8" fill="none" stroke="#b3391f" stroke-width="1.0"/><rect x="226.5" y="189.2" width="56.6" height="21.6" rx="3" fill="#dcdddf" stroke="#bf4c36" stroke-width="1.1"/><path d="M250 210.79999999999998 L260 189.2" fill="none" stroke="#bf4c36" stroke-width="1.1"/><text class="" x="240" y="203.7" font-size="10.6" fill="#8c8c8c" text-anchor="middle" >1</text><text class="" x="269.4" y="203.7" font-size="10.6" fill="#8c8c8c" text-anchor="middle" >4</text><rect x="226.5" y="239.2" width="56.6" height="21.6" rx="3" fill="#dcdddf" stroke="#bf4c36" stroke-width="1.1"/><path d="M250 260.8 L260 239.2" fill="none" stroke="#bf4c36" stroke-width="1.1"/><text class="" x="240" y="253.7" font-size="10.6" fill="#8c8c8c" text-anchor="middle" >1</text><text class="" x="269.4" y="253.7" font-size="10.6" fill="#8c8c8c" text-anchor="middle" >8</text><rect x="226.5" y="289.2" width="56.6" height="21.6" rx="3" fill="#dcdddf" stroke="#bf4c36" stroke-width="1.1"/><path d="M250 310.8 L260 289.2" fill="none" stroke="#bf4c36" stroke-width="1.1"/><text class="" x="240" y="303.7" font-size="10.6" fill="#8c8c8c" text-anchor="middle" >1</text><text class="" x="269.4" y="303.7" font-size="10.6" fill="#8c8c8c" text-anchor="middle" >16</text><path d="M254.6 210.8 V239.2 M254.6 260.8 V289.2" fill="none" stroke="#bf4c36" stroke-width="1.1"/><path d="M405 200.4 H317.6 V290 M317.6 250.2 H340" fill="none" stroke="#bf4c36" stroke-width="1.1"/><circle cx="405.8" cy="200.4" r="11.1" fill="#b3391f" stroke="#b01c12" stroke-width="1"/><circle cx="347" cy="250.2" r="11.1" fill="#b3391f" stroke="#b01c12" stroke-width="1"/><circle cx="323.4" cy="299.8" r="11.1" fill="#b3391f" stroke="#b01c12" stroke-width="1"/><text class="lt" x="510.2" y="206.9" font-size="10.1" fill="#747474" text-anchor="middle" textLength="28.4" lengthAdjust="spacingAndGlyphs" stroke="#747474" stroke-width="0.22" >RATIO</text><circle cx="510.2" cy="258" r="41" fill="none" stroke="#bf4c36" stroke-width="1.1"/><path d="M510.2 217 V228.4 M504.4 269.2 L516 246.6" fill="none" stroke="#bf4c36" stroke-width="1.1"/><text class="lt" x="582" y="158.4" font-size="12.7" fill="#3c3c3c" text-anchor="start" textLength="36" lengthAdjust="spacingAndGlyphs" stroke="#3c3c3c" stroke-width="0.22" >PITCH</text><path d="M597.6 169.3 H585 L597.6 170.9 L585 171.3 L597.6 173 H585 L597.6 179.6 H585 L597.6 192.6 H585 L597.8 219.6" fill="none" stroke="#b3391f" stroke-width="1.0"/><path d="M658.2 220 V280.4 H829 M715 232.4 V280.4 M772.4 256.4 V280.4" fill="none" stroke="#bf4c36" stroke-width="1.1"/><circle cx="658.2" cy="220" r="11.1" fill="#b3391f" stroke="#b01c12" stroke-width="1"/><circle cx="715" cy="232.4" r="11.1" fill="#b3391f" stroke="#b01c12" stroke-width="1"/><circle cx="772.4" cy="256.4" r="11.1" fill="#b3391f" stroke="#b01c12" stroke-width="1"/><circle cx="829.4" cy="268.2" r="11.1" fill="#b3391f" stroke="#b01c12" stroke-width="1"/><path d="M675 325.4 H698 M732 325.4 H755 M789 325.4 H812" fill="none" stroke="#bf4c36" stroke-width="1.1"/><rect x="641.3" y="314" width="33.7" height="23.6" rx="3" fill="#dcdddf" stroke="#bf4c36" stroke-width="1.1"/><text class="" x="658.1999999999999" y="329" font-size="10.2" fill="#8c8c8c" text-anchor="middle" >E1</text><rect x="698.3" y="314" width="33.7" height="23.6" rx="3" fill="#dcdddf" stroke="#bf4c36" stroke-width="1.1"/><text class="" x="715.1999999999999" y="329" font-size="10.2" fill="#8c8c8c" text-anchor="middle" >F#1</text><rect x="755.4" y="314" width="33.7" height="23.6" rx="3" fill="#dcdddf" stroke="#bf4c36" stroke-width="1.1"/><text class="" x="772.3" y="329" font-size="10.2" fill="#8c8c8c" text-anchor="middle" >A#1</text><rect x="812.5" y="314" width="33.7" height="23.6" rx="3" fill="#dcdddf" stroke="#bf4c36" stroke-width="1.1"/><text class="" x="829.4" y="329" font-size="10.2" fill="#8c8c8c" text-anchor="middle" >C2</text><rect x="596" y="318.6" width="15.4" height="15" fill="#fff" stroke="#b4b4b4" stroke-width="1"/><path d="M601.1 318.6 V333.6 M606.3 318.6 V333.6" stroke="#b4b4b4" stroke-width="1"/><path d="M601.1 319 V327 M606.3 319 V327" stroke="#b4b4b4" stroke-width="2.6"/><text class="lt" x="887" y="158.4" font-size="12.7" fill="#3c3c3c" text-anchor="start" textLength="66" lengthAdjust="spacingAndGlyphs" stroke="#3c3c3c" stroke-width="0.22" >BICHORDS</text><path d="M959 151.2 H1010.4 M959 163.8 H1010.4" fill="none" stroke="#bf4c36" stroke-width="1.1"/><text class="lt" x="941.2" y="206.4" font-size="10.1" fill="#747474" text-anchor="middle" textLength="41.4" lengthAdjust="spacingAndGlyphs" stroke="#747474" stroke-width="0.22" >CHANCE</text><circle cx="941.5" cy="257.2" r="41" fill="none" stroke="#bf4c36" stroke-width="1.1"/><path d="M941.50 298.20 A41 41 0 0 1 902.66 270.35 L913.46 266.69 A29.6 29.6 0 0 0 941.50 286.80 Z" fill="#c3634d"/><text class="lt" x="941.5" y="265.2" font-size="21" fill="#b3391f" text-anchor="middle" stroke="#b3391f" stroke-width="0.22" >%</text><rect x="1015" y="183.2" width="33.2" height="23.4" rx="3" fill="#dcdddf" stroke="#bf4c36" stroke-width="1.1"/><text class="" x="1031.6" y="198.2" font-size="10.4" fill="#8c8c8c" text-anchor="middle" >+ 7</text><rect x="1015" y="312.6" width="33.2" height="23.4" rx="3" fill="#dcdddf" stroke="#bf4c36" stroke-width="1.1"/><text class="" x="1031.6" y="327.6" font-size="10.4" fill="#8c8c8c" text-anchor="middle" >+ 5</text><path d="M1031.4 206.6 V312.6" fill="none" stroke="#bf4c36" stroke-width="1.1"/><circle cx="1031.4" cy="259.6" r="8.1" fill="#b3391f" stroke="#b01c12" stroke-width="1"/><text class="lt" x="224.4" y="369.2" font-size="12.7" fill="#3c3c3c" text-anchor="start" textLength="58.2" lengthAdjust="spacingAndGlyphs" stroke="#3c3c3c" stroke-width="0.22" >PROCESS</text><path d="M289.6 361.8 H296 L302.2 368 H314.6 L321 361.8 L327.4 368 L333.8 361.8 L340 368 M289.6 374.8 H340" fill="none" stroke="#b3391f" stroke-width="1.2"/><text class="lt" x="280.4" y="395.2" font-size="10.1" fill="#747474" text-anchor="middle" textLength="45.4" lengthAdjust="spacingAndGlyphs" stroke="#747474" stroke-width="0.22" >VELOCITY</text><text class="lt" x="397.6" y="395.2" font-size="10.1" fill="#747474" text-anchor="middle" textLength="22.2" lengthAdjust="spacingAndGlyphs" stroke="#747474" stroke-width="0.22" >LESS</text><text class="lt" x="514.8" y="395.2" font-size="10.1" fill="#747474" text-anchor="middle" textLength="30.6" lengthAdjust="spacingAndGlyphs" stroke="#747474" stroke-width="0.22" >DELAY</text><text class="lt" x="631.8" y="395.2" font-size="10.1" fill="#747474" text-anchor="middle" textLength="38.4" lengthAdjust="spacingAndGlyphs" stroke="#747474" stroke-width="0.22" >LENGTH</text><path d="M280.50 487.00 A40.8 40.8 0 1 1 286.88 405.90 L285.10 417.16 A29.4 29.4 0 1 0 280.50 475.60 Z" fill="#c3634d"/><circle cx="280.5" cy="446.2" r="40.8" fill="none" stroke="#bf4c36" stroke-width="1.1"/><path d="M269 457.8 V451.4 M280.2 457.8 V445.6 M291.6 457.8 V435" fill="none" stroke="#bf4c36" stroke-width="1.1"/><path d="M306.4 478.2 L320.6 494.4" fill="none" stroke="#bf4c36" stroke-width="1.1"/><circle cx="339" cy="517" r="28.8" fill="none" stroke="#bf4c36" stroke-width="1.1"/><path d="M339.00 545.80 A28.8 28.8 0 0 1 311.77 526.38 L319.14 523.84 A21 21 0 0 0 339.00 538.00 Z" fill="#c3634d"/><text class="lt" x="339" y="522.6" font-size="15" fill="#b3391f" text-anchor="middle" stroke="#b3391f" stroke-width="0.22" >%</text><circle cx="267.8" cy="515.6" r="7.4" fill="none" stroke="#bf4c36" stroke-width="1.1"/><path d="M264 515.6 H271.6" fill="none" stroke="#bf4c36" stroke-width="1.2"/><path d="M275.2 515.6 H284" fill="none" stroke="#bf4c36" stroke-width="1.1"/><circle cx="291.8" cy="515.6" r="7.5" fill="#b3391f" stroke="#b01c12" stroke-width="1"/><path d="M287.6 515.6 H296 M291.8 511.4 V519.8" fill="none" stroke="#f6eeee" stroke-width="1.5"/><circle cx="397.7" cy="446.2" r="40.8" fill="none" stroke="#bf4c36" stroke-width="1.1"/><path d="M397.7 476 V487" fill="none" stroke="#bf4c36" stroke-width="1.1"/><path d="M380.6 446 H392.6 M397 446 H402 M404.4 446 H408 M410 446 H414" fill="none" stroke="#bf4c36" stroke-width="1.1"/><circle cx="514.8" cy="446.2" r="40.8" fill="none" stroke="#bf4c36" stroke-width="1.1"/><path d="M497.4 451.8 L500.3 440.8 L500.1 451.8 L504.5 440.8 L504.7 451.8 L513.6 440.8 L513.8 451.8 L531.7 440.8 V451.8" fill="none" stroke="#b3391f" stroke-width="1.0"/><path d="M514.8 476 V500 M514.8 516.6 V530" fill="none" stroke="#bf4c36" stroke-width="1.1"/><rect x="487.6" y="500" width="53.4" height="16.6" fill="none" stroke="#bf4c36" stroke-width="1.1"/><text class="lt" x="514.4" y="511.4" font-size="8.2" fill="#bf4c36" text-anchor="middle" textLength="34.4" lengthAdjust="spacingAndGlyphs" stroke="#bf4c36" stroke-width="0.22" >RANDOM</text><rect x="504.4" y="530" width="21" height="16.6" fill="none" stroke="#bf4c36" stroke-width="1.1"/><text class="lt" x="515" y="541.4" font-size="8.2" fill="#bf4c36" text-anchor="middle" textLength="15.8" lengthAdjust="spacingAndGlyphs" stroke="#bf4c36" stroke-width="0.22" >DRY</text><circle cx="632" cy="446.2" r="35.1" fill="none" stroke="#c3634d" stroke-width="11.4"/><circle cx="632" cy="446.2" r="40.8" fill="none" stroke="#bf4c36" stroke-width="1.1"/><path d="M615.3 440.2 V452 M648.7 440.2 V452 M615.3 446.1 H648.7" fill="none" stroke="#bf4c36" stroke-width="1.1"/><path d="M632 476 V514" fill="none" stroke="#b3391f" stroke-width="1.1"/><rect x="604.6" y="514" width="54" height="16.6" fill="none" stroke="#bf4c36" stroke-width="1.1"/><text class="lt" x="631.6" y="525.4" font-size="8.2" fill="#bf4c36" text-anchor="middle" textLength="34.4" lengthAdjust="spacingAndGlyphs" stroke="#bf4c36" stroke-width="0.22" >RANDOM</text><text class="lt" x="703.8" y="369.2" font-size="12.7" fill="#3c3c3c" text-anchor="start" textLength="57.8" lengthAdjust="spacingAndGlyphs" stroke="#3c3c3c" stroke-width="0.22" >MEMORY</text><circle cx="774.6" cy="368.2" r="6.4" fill="none" stroke="#b3391f" stroke-width="1.25"/><circle cx="812.6" cy="368.2" r="6.4" fill="none" stroke="#b3391f" stroke-width="1.25"/><path d="M774.6 361.8 H812.6 M774.6 374.6 H812.6" fill="none" stroke="#b3391f" stroke-width="1.2"/><text class="lt" x="785.4" y="424.6" font-size="10.1" fill="#747474" text-anchor="middle" textLength="35.9" lengthAdjust="spacingAndGlyphs" stroke="#747474" stroke-width="0.22" >BUFFER</text><rect x="757" y="435.2" width="57" height="21.8" rx="3" fill="#dcdddf" stroke="#bf4c36" stroke-width="1.1"/><path d="M780 457 L790 435.2" fill="none" stroke="#bf4c36" stroke-width="1.1"/><text class="" x="770.6" y="450" font-size="10.6" fill="#8c8c8c" text-anchor="middle" >4</text><text class="" x="800.4" y="450" font-size="10.6" fill="#8c8c8c" text-anchor="middle" >4</text><text class="lt" x="971" y="424.6" font-size="10.1" fill="#747474" text-anchor="middle" textLength="37.5" lengthAdjust="spacingAndGlyphs" stroke="#747474" stroke-width="0.22" >EXPORT</text><path d="M970.7 435 L980.8 457.8 H960.6 Z" fill="#b3391f"/><text class="lt" x="878" y="506.8" font-size="10.1" fill="#747474" text-anchor="middle" textLength="40.3" lengthAdjust="spacingAndGlyphs" stroke="#747474" stroke-width="0.22" >LIV/MEM</text><path d="M754 523 H1002.8" fill="none" stroke="#bf4c36" stroke-width="1.1"/><circle cx="754" cy="523" r="8.1" fill="#b3391f" stroke="#b01c12" stroke-width="1"/><text class="lt" x="225.4" y="574.3" font-size="10.2" fill="#b3391f" text-anchor="start" textLength="51" lengthAdjust="spacingAndGlyphs" stroke="#b3391f" stroke-width="0.3" >TATAT v 1.4</text><rect x="602.3" y="562.5" width="28.4" height="16.4" fill="none" stroke="#bf4c36" stroke-width="1.1"/><text class="lt" x="616.6" y="573.6" font-size="7.9" fill="#c4604e" text-anchor="middle" textLength="19.8" lengthAdjust="spacingAndGlyphs" stroke="#c4604e" stroke-width="0.22" >THRU</text><rect x="643.4" y="563.4" width="4.4" height="15" fill="#8e8e8e"/><rect x="651.8" y="563.4" width="4.4" height="15" fill="#8e8e8e"/><circle cx="1033.7" cy="571" r="7.4" fill="none" stroke="#bf4c36" stroke-width="1.1"/><circle cx="1033.7" cy="571" r="3.5" fill="#b3391f" stroke="#b01c12" stroke-width="1"/><path d="M1047.6 583 L1060 570.6 V583 Z" fill="#4b4e46"/><path d="M1047.2 582.6 L1059.6 570.2" stroke="#555" stroke-width="1"/><path d="M1049.6 582.8 L1059.8 572.6" stroke="#fafafa" stroke-width="1.5"/><path d="M1051.8 583 L1060 574.8" stroke="#444" stroke-width="1"/></svg>
</div>
</body></html>
